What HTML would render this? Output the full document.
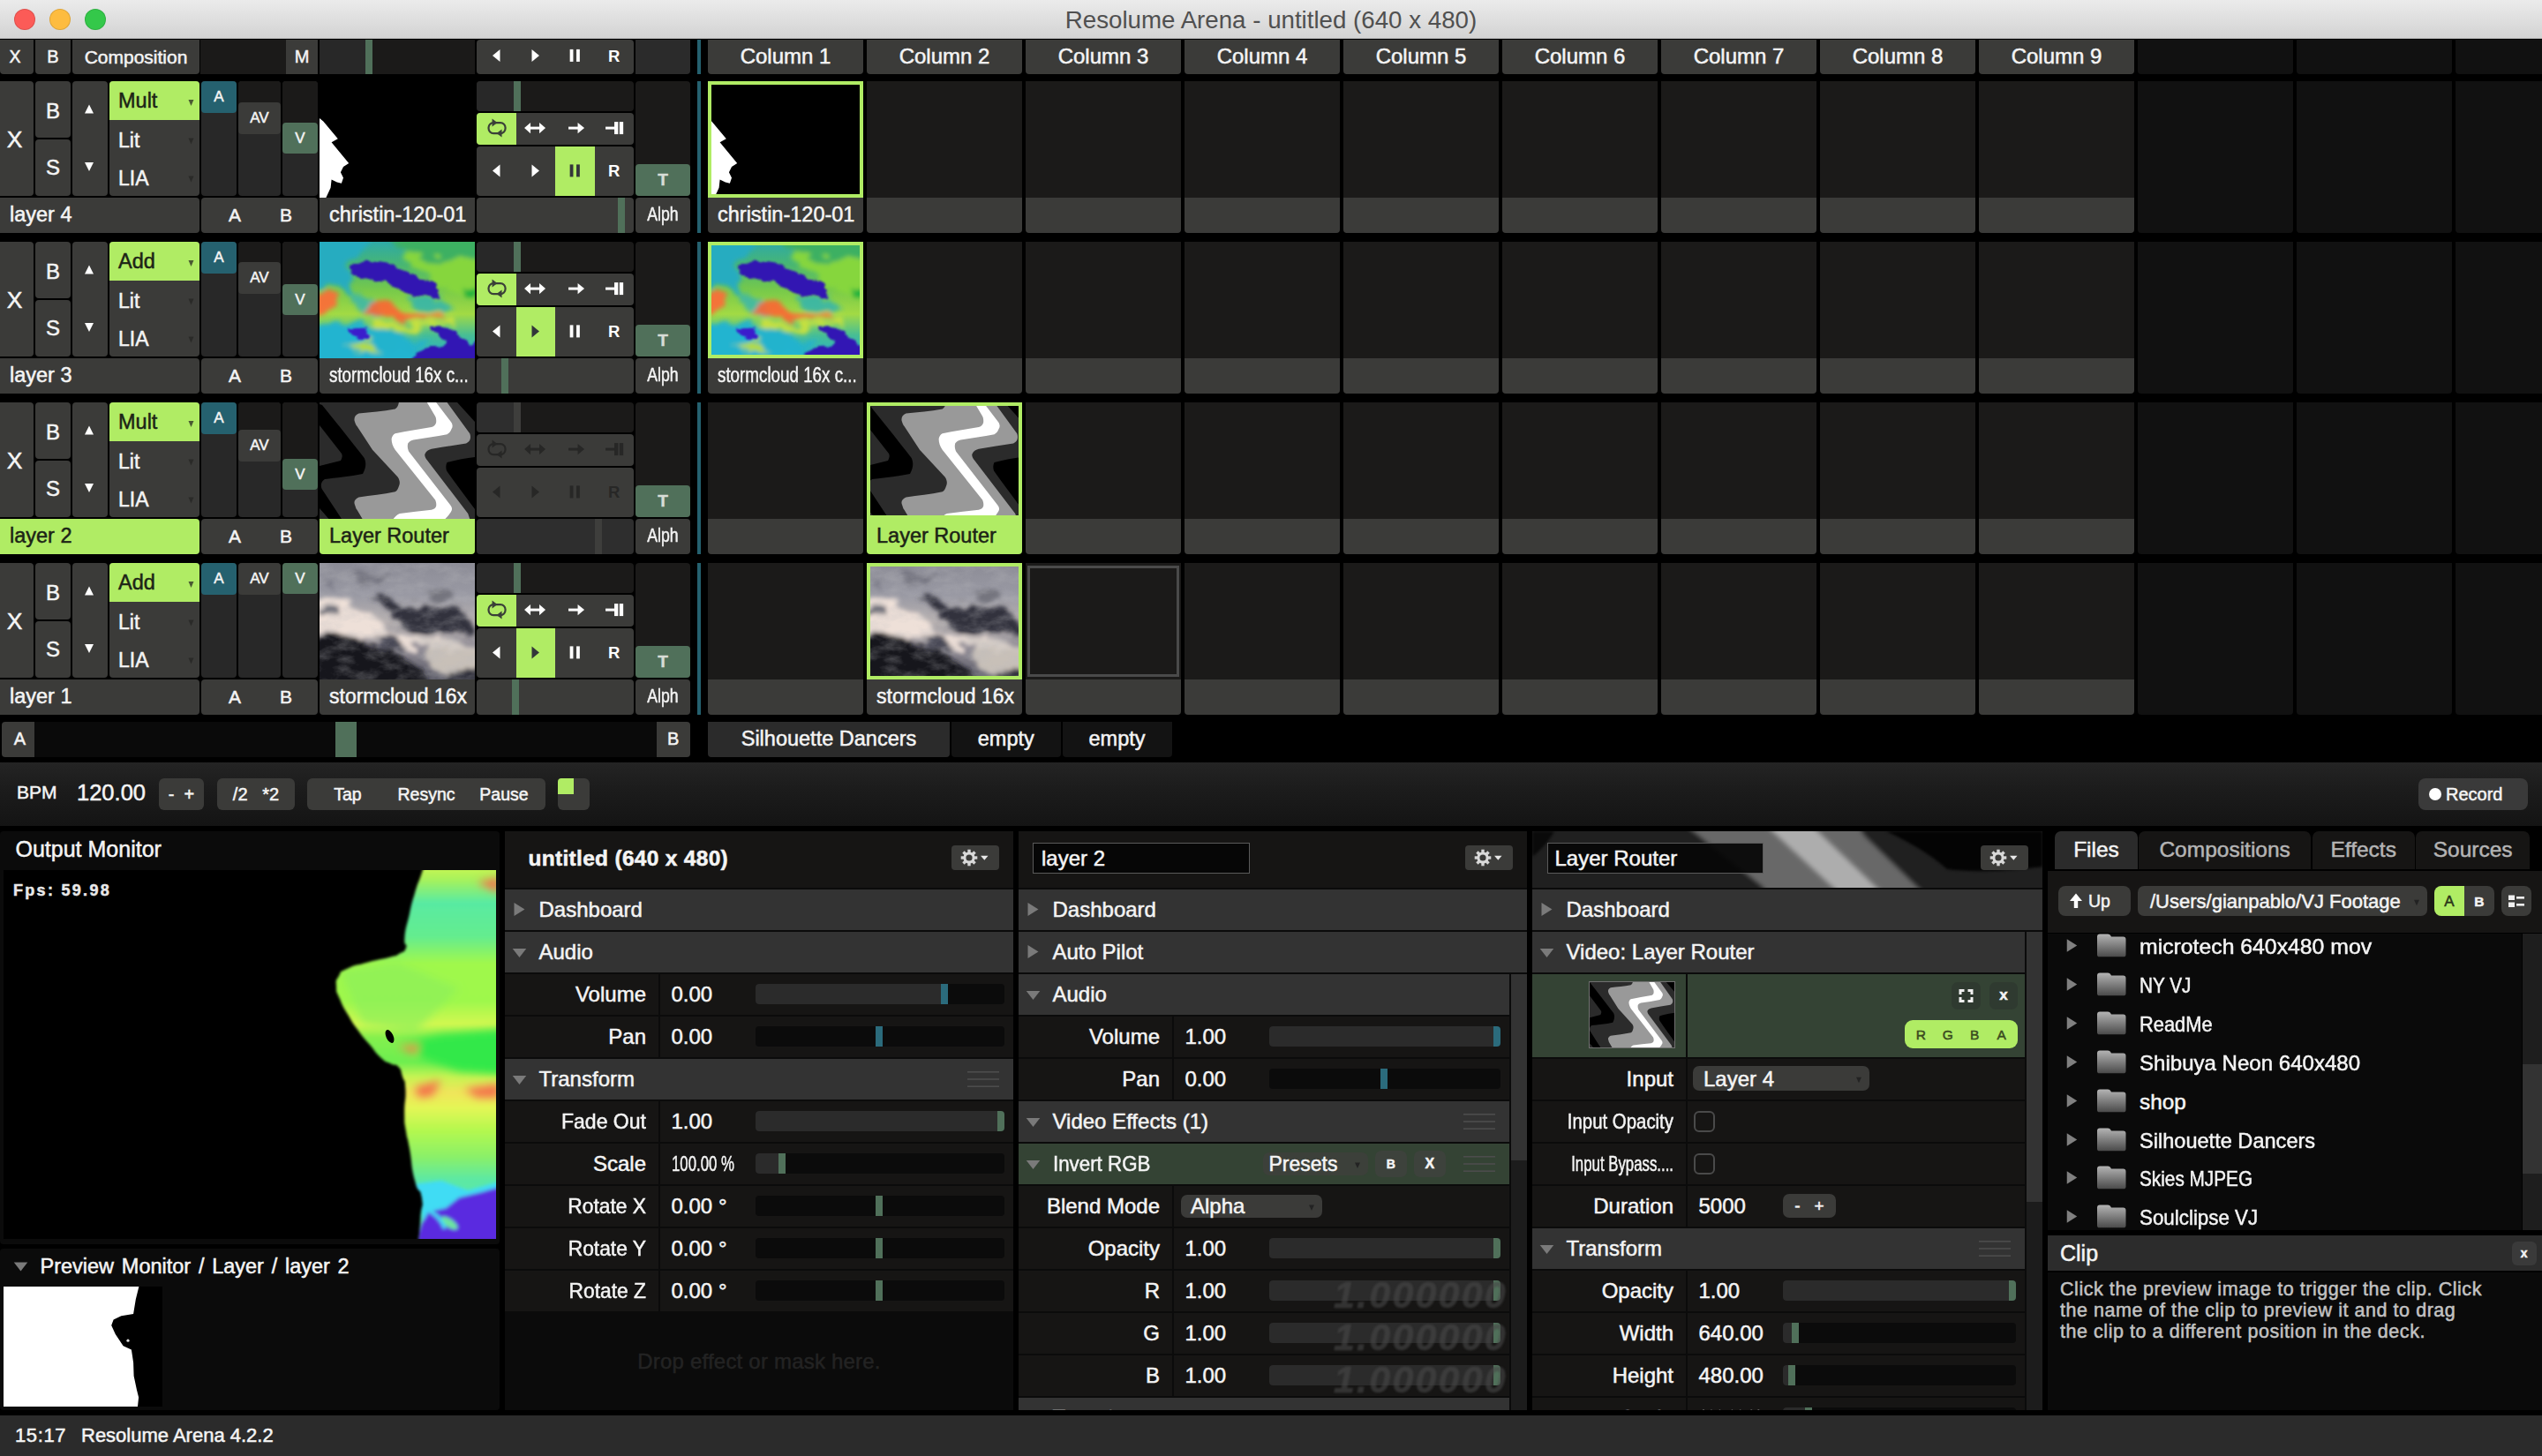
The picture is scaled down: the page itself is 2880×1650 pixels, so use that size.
<!DOCTYPE html>
<html><head><meta charset="utf-8"><title>Resolume Arena - untitled (640 x 480)</title>
<style>
html,body{margin:0;padding:0;background:#000;}
body{width:2880px;height:1650px;overflow:hidden;position:relative;font-family:"Liberation Sans",sans-serif;color:#f4f4f4;}
.b{position:absolute;display:block;}
.t{white-space:nowrap;-webkit-text-stroke:0.5px currentColor;}
svg text{font-family:"Liberation Sans",sans-serif;}
</style></head>
<body>

<svg width="0" height="0" style="position:absolute">
<defs>
<filter id="bl1" x="-10%" y="-10%" width="120%" height="120%"><feGaussianBlur stdDeviation="0.6"/></filter>
<filter id="bl15" x="-5%" y="-5%" width="110%" height="110%"><feGaussianBlur stdDeviation="1.5"/></filter>
<filter id="bl3" x="-20%" y="-20%" width="140%" height="140%"><feGaussianBlur stdDeviation="2.6"/></filter>
<filter id="bl5" x="-20%" y="-20%" width="140%" height="140%"><feGaussianBlur stdDeviation="5"/></filter>
<filter id="bl8" x="-20%" y="-20%" width="140%" height="140%"><feGaussianBlur stdDeviation="8"/></filter>

<!-- grey wave pattern 176x132 -->
<symbol id="wave" viewBox="0 0 176 132" preserveAspectRatio="none">
 <rect width="176" height="132" fill="#2b2b2b"/>
 <g filter="url(#bl1)">
 <path d="M0,2 L3,3 C20,24 36,44 50.7,63 C53,68 53,74 49,81 C35,84 18,85.5 6,87 C1,90 1,96 3.3,99 L25,132 L10.5,132 L0,120 L0,72 C8,70 16,68 24,66 C26,62 26,60 25,58 L0,26 Z" fill="#000"/>
 <path d="M144.5,68 C156,65 166,63 176,62 L176,121 C165,106 154,92 144,77.5 C143,74 143,71 144.5,68 Z" fill="#000"/>
 <path d="M156,0 L176,0 L176,22 Z" fill="#000"/>
 <path d="M89.9,0 C89,4 88,6 85.7,7.4 C72,10 58,11 44.5,12.6 C40,14 38.5,19 40,22 C41,25 41.5,26 42.5,27 L60,53.8 L88.8,84.7 C91,88 91.5,92 89.9,95 C89,98 88,100 85.7,101.2 C72,104 58,105.5 44.5,107.4 C40,109 38.5,113 40,116 C41,119 41.5,121 42.5,121.8 L48.6,132 L170.2,132 L168.2,125.9 L120.8,64.1 C119,61 119,59 119.7,57.9 C121,55 124,53.5 126.9,52.8 C140,50.5 153,48.5 166.1,46.6 C169,45 170.5,43 170.8,41 C171.2,39 171,37 170.2,35.2 L144.5,0 Z" fill="#999"/>
 <path d="M121.8,0 L132.1,0 L149.6,22.9 C151,25.5 151,28 149.6,30.1 C148.5,33 147,35 144.5,36.3 C132,38.8 119,40.5 106.3,42.5 C103,43.5 101,45 100.2,46.6 C99.3,49.5 100,53 101.2,55.8 L147.6,115.6 C150,118.5 150.5,120.5 149.6,122.8 C148,126 145.5,129 142.4,132 L83.7,132 C85.5,129.5 88,127 90.9,125.9 C103,124.3 115,123 126.9,121.8 C130,121 131.5,119.5 132.1,117.7 C132.6,115 132,112.5 131.1,110.5 L85.7,53.8 C83,49.5 81.6,45.5 81.6,41.4 C82,38.5 83.5,36.3 85.7,35.2 C99,32.5 113,30.3 126.9,28 C130,27 131.5,25 132.1,22.9 C132.5,20 132,17.5 131.1,15.7 Z" fill="#fff"/>
 </g>
</symbol>

<!-- heat-map cloud 176x132 -->
<filter id="rough" x="-10%" y="-10%" width="120%" height="120%">
 <feTurbulence type="fractalNoise" baseFrequency="0.045 0.07" numOctaves="3" seed="7" result="n"/>
 <feDisplacementMap in="SourceGraphic" in2="n" scale="16" xChannelSelector="R" yChannelSelector="G"/>
 <feGaussianBlur stdDeviation="1.1"/>
</filter>
<filter id="rough2" x="-10%" y="-10%" width="120%" height="120%">
 <feTurbulence type="fractalNoise" baseFrequency="0.035 0.06" numOctaves="4" seed="3" result="n"/>
 <feDisplacementMap in="SourceGraphic" in2="n" scale="26" xChannelSelector="R" yChannelSelector="G"/>
 <feGaussianBlur stdDeviation="2.6"/>
</filter>
<filter id="cnoise" x="0" y="0" width="100%" height="100%">
 <feTurbulence type="fractalNoise" baseFrequency="0.05 0.09" numOctaves="4" seed="11"/>
 <feColorMatrix type="matrix" values="0 0 0 0 0.5  0 0 0 0 0.5  0 0 0 0 0.52  1.6 0 0 0 -0.62"/>
</filter>
<symbol id="heat" viewBox="0 0 176 132" preserveAspectRatio="none">
 <linearGradient id="hg" x1="0" y1="0" x2="0" y2="1">
  <stop offset="0" stop-color="#2eaaa8"/><stop offset="0.2" stop-color="#48b672"/>
  <stop offset="0.42" stop-color="#78ca4a"/><stop offset="0.62" stop-color="#a2da44"/>
  <stop offset="0.8" stop-color="#48be94"/><stop offset="1" stop-color="#22b2cc"/>
 </linearGradient>
 <rect width="176" height="132" fill="url(#hg)"/>
 <g filter="url(#rough2)">
  <path d="M-10,-10 L64,-10 L34,30 L40,58 L-10,52 Z" fill="#26acc0"/>
  <path d="M96,16 L190,6 L190,72 L150,60 Z" fill="#86d63e"/>
  <path d="M-10,98 L40,92 L100,108 L112,142 L-10,142 Z" fill="#22b4d0"/>
  <path d="M100,58 L138,66 L152,78 L140,80 L104,68 Z" fill="#2ab2b6" opacity=".8"/><path d="M70,-12 L190,-12 L190,22 L100,14 Z" fill="#3cb062"/><path d="M36,50 L52,58 L72,84 L60,88 L40,66 Z" fill="#2ab0c0" opacity=".7"/>
  <path d="M40,86 L60,96 L100,112 L130,112 L120,122 L60,116 L30,100 Z" fill="#24b2cc" opacity=".9"/>
  <path d="M-6,62 L14,60 L18,74 L6,84 L-6,84 Z" fill="#ff6a38" opacity=".9"/>
  <path d="M52,78 L64,70 L88,68 L96,78 L136,82 L118,88 L96,90 L76,87 L62,84 Z" fill="#ff6232" opacity=".88"/><path d="M100,78 L138,80 L140,86 L100,87 Z" fill="#fa7a3a" opacity=".75"/>
  <path d="M60,90 L110,94 L152,84 L152,94 L100,102 L66,98 Z" fill="#c6e040"/>
  <path d="M26,118 L60,114 L72,124 L34,127 Z" fill="#b4dc3c"/>
  <path d="M160,54 L182,52 L182,62 L162,62 Z" fill="#24b43c"/>
 </g>
 <g filter="url(#rough)">
  <path d="M34,28 C44,21 60,21 72,26 C90,30 104,36 116,41 C124,39 132,50 136,60 C136,65 130,65 122,63 C110,61 100,58 90,51 C76,45 56,44 44,38 C38,34 34,32 34,28 Z" fill="#3016b2"/>
  <path d="M28,95 C36,95 48,97 56,100 C60,104 60,110 56,113 C50,113 46,112 42,108 C38,104 30,100 28,95 Z" fill="#3a1ccc"/>
  <path d="M126,100 C132,93 142,95 150,99 C158,103 160,111 168,117 L184,108 L184,140 L104,140 C106,124 118,119 130,119 C140,119 146,116 144,110 C138,106 130,104 126,100 Z" fill="#3216b4"/>
 </g>
</symbol>

<!-- grey storm cloud 176x132 -->
<symbol id="cloud" viewBox="0 0 176 132" preserveAspectRatio="none">
 <linearGradient id="cg" x1="0" y1="0" x2="0" y2="1">
  <stop offset="0" stop-color="#8c8c96"/><stop offset="0.28" stop-color="#9a9aa4"/>
  <stop offset="0.5" stop-color="#b6b0b0"/><stop offset="0.75" stop-color="#8a8690"/><stop offset="1" stop-color="#5a5a66"/>
 </linearGradient>
 <rect width="176" height="132" fill="url(#cg)"/>
 <g filter="url(#rough2)">
  <path d="M-14,40 L28,42 L58,56 L76,76 L120,84 L150,86 L150,96 L110,98 L60,88 L-14,76 Z" fill="#eee0d8"/>
  <path d="M100,86 L150,86 L190,92 L190,112 L130,108 Z" fill="#d4ccc6"/>
  <path d="M62,38 L86,42 L112,52 L150,50 L172,66 L170,84 L140,78 L108,74 L86,62 Z" fill="#30303e"/>
  <path d="M120,30 L140,22 L150,40 L128,44 Z" fill="#74747e"/>
  <path d="M-14,84 L28,82 L50,90 L84,100 L112,118 L124,146 L-14,146 Z" fill="#16161f"/>
  <path d="M60,84 L84,80 L96,96 L76,100 Z" fill="#4a4a56"/>
  <path d="M122,100 L190,94 L190,122 L150,128 L130,120 Z" fill="#c8c0b8"/>
  <path d="M148,124 L190,116 L190,146 L138,146 Z" fill="#32323e"/>
  <path d="M30,6 L76,8 L70,26 L40,24 Z" fill="#777782"/><path d="M10,16 L24,14 L22,30 L10,28 Z" fill="#7c7c88"/>
  <path d="M0,52 L20,54 L18,64 L0,62 Z" fill="#6e6e78"/>
 </g>
 <rect width="176" height="132" filter="url(#cnoise)" opacity=".38"/>
</symbol>

<!-- christin silhouette 176x132 -->
<symbol id="chris" viewBox="0 0 176 132" preserveAspectRatio="none">
 <rect width="176" height="132" fill="#000"/>
 <path d="M0,42 L4.3,45.6 L20.8,65.2 L13.6,69.3 L33.2,93 L27,97.1 L23.9,103.3 L27,109.5 L24.9,115.7 L19.8,114.6 L13.6,111.6 L12.6,120.8 L7.4,132 L0,132 Z" fill="#fff" filter="url(#bl1)"/>
</symbol>
</defs>
</svg>

<div class="b" style="left:0px;top:0px;width:2880px;height:44px;background:linear-gradient(#ebebeb,#d3d3d3);border-bottom:1px solid #b4b4b4;box-sizing:border-box;"></div>
<div class="b" style="left:16px;top:10px;width:24px;height:24px;background:#fc5b57;border-radius:50%;box-shadow:inset 0 0 0 1px rgba(0,0,0,.12);"></div>
<div class="b" style="left:56px;top:10px;width:24px;height:24px;background:#fdbc40;border-radius:50%;box-shadow:inset 0 0 0 1px rgba(0,0,0,.12);"></div>
<div class="b" style="left:96px;top:10px;width:24px;height:24px;background:#34c84a;border-radius:50%;box-shadow:inset 0 0 0 1px rgba(0,0,0,.12);"></div>
<div class="b t" style="left:940px;top:0px;width:1000px;height:45px;font-size:27.7px;line-height:45px;text-align:center;color:#505050;-webkit-text-stroke:0;">Resolume Arena - untitled (640 x 480)</div>
<div class="b" style="left:0px;top:44.5px;width:37.5px;height:39px;background:#3b3b39;border-radius:0 0 4px 4px;"></div>
<div class="b t" style="left:0px;top:44.5px;width:34px;height:39px;font-size:19.5px;line-height:39px;text-align:center;color:#f4f4f4;border-radius:0 0 4px 4px;">X</div>
<div class="b t" style="left:40px;top:44.5px;width:40px;height:39px;background:#3b3b39;font-size:20px;line-height:39px;text-align:center;color:#f4f4f4;border-radius:0 0 4px 4px;">B</div>
<div class="b t" style="left:82px;top:44.5px;width:144px;height:39px;background:#3b3b39;font-size:21px;line-height:39px;text-align:center;color:#f4f4f4;border-radius:0 0 4px 4px;">Composition</div>
<div class="b" style="left:227px;top:44.5px;width:133px;height:39px;background:#1b1a19;"></div>
<div class="b t" style="left:324px;top:44.5px;width:36px;height:39px;background:#3b3b39;font-size:20px;line-height:39px;text-align:center;color:#f4f4f4;">M</div>
<div class="b" style="left:362px;top:44.5px;width:176px;height:39px;background:#1b1a19;"></div>
<div class="b" style="left:362px;top:44.5px;width:52px;height:39px;background:#282828;"></div>
<div class="b" style="left:414px;top:44.5px;width:8px;height:39px;background:#50705a;"></div>
<div class="b" style="left:540px;top:44.5px;width:178px;height:39px;background:#3b3b39;border-radius:4px;overflow:hidden;"></div>
<svg class="b" style="left:540px;top:44.5px;" width="178" height="39" viewBox="0 0 178 39"><polygon points="26.5,10.9 26.5,24.9 18,17.9" fill="#fff"/><polygon points="62.5,10.9 62.5,24.9 71,17.9" fill="#fff"/><rect x="105.65" y="10.9" width="3.8" height="14" fill="#fff"/><rect x="113.05" y="10.9" width="3.8" height="14" fill="#fff"/><text x="155.75" y="24.5" font-size="18.5" font-weight="bold" text-anchor="middle" fill="#fff">R</text></svg>
<div class="b" style="left:720px;top:44.5px;width:62px;height:39px;background:#2b2b2b;border-radius:0 0 4px 0;"></div>
<div class="b" style="left:790px;top:44.5px;width:4px;height:39px;background:#25616f;"></div>
<div class="b" style="left:802px;top:44.5px;width:176px;height:39px;background:#3b3b39;border-radius:0 0 4px 4px;"></div>
<div class="b t" style="left:802px;top:44.5px;width:176px;height:38px;font-size:24px;line-height:38px;text-align:center;color:#f4f4f4;border-radius:0 0 4px 4px;">Column 1</div>
<div class="b" style="left:982px;top:44.5px;width:176px;height:39px;background:#3b3b39;border-radius:0 0 4px 4px;"></div>
<div class="b t" style="left:982px;top:44.5px;width:176px;height:38px;font-size:24px;line-height:38px;text-align:center;color:#f4f4f4;border-radius:0 0 4px 4px;">Column 2</div>
<div class="b" style="left:1162px;top:44.5px;width:176px;height:39px;background:#3b3b39;border-radius:0 0 4px 4px;"></div>
<div class="b t" style="left:1162px;top:44.5px;width:176px;height:38px;font-size:24px;line-height:38px;text-align:center;color:#f4f4f4;border-radius:0 0 4px 4px;">Column 3</div>
<div class="b" style="left:1342px;top:44.5px;width:176px;height:39px;background:#3b3b39;border-radius:0 0 4px 4px;"></div>
<div class="b t" style="left:1342px;top:44.5px;width:176px;height:38px;font-size:24px;line-height:38px;text-align:center;color:#f4f4f4;border-radius:0 0 4px 4px;">Column 4</div>
<div class="b" style="left:1522px;top:44.5px;width:176px;height:39px;background:#3b3b39;border-radius:0 0 4px 4px;"></div>
<div class="b t" style="left:1522px;top:44.5px;width:176px;height:38px;font-size:24px;line-height:38px;text-align:center;color:#f4f4f4;border-radius:0 0 4px 4px;">Column 5</div>
<div class="b" style="left:1702px;top:44.5px;width:176px;height:39px;background:#3b3b39;border-radius:0 0 4px 4px;"></div>
<div class="b t" style="left:1702px;top:44.5px;width:176px;height:38px;font-size:24px;line-height:38px;text-align:center;color:#f4f4f4;border-radius:0 0 4px 4px;">Column 6</div>
<div class="b" style="left:1882px;top:44.5px;width:176px;height:39px;background:#3b3b39;border-radius:0 0 4px 4px;"></div>
<div class="b t" style="left:1882px;top:44.5px;width:176px;height:38px;font-size:24px;line-height:38px;text-align:center;color:#f4f4f4;border-radius:0 0 4px 4px;">Column 7</div>
<div class="b" style="left:2062px;top:44.5px;width:176px;height:39px;background:#3b3b39;border-radius:0 0 4px 4px;"></div>
<div class="b t" style="left:2062px;top:44.5px;width:176px;height:38px;font-size:24px;line-height:38px;text-align:center;color:#f4f4f4;border-radius:0 0 4px 4px;">Column 8</div>
<div class="b" style="left:2242px;top:44.5px;width:176px;height:39px;background:#3b3b39;border-radius:0 0 4px 4px;"></div>
<div class="b t" style="left:2242px;top:44.5px;width:176px;height:38px;font-size:24px;line-height:38px;text-align:center;color:#f4f4f4;border-radius:0 0 4px 4px;">Column 9</div>
<div class="b" style="left:2422px;top:44.5px;width:176px;height:39px;background:#111111;border-radius:0 0 4px 4px;"></div>
<div class="b" style="left:2602px;top:44.5px;width:176px;height:39px;background:#111111;border-radius:0 0 4px 4px;"></div>
<div class="b" style="left:2782px;top:44.5px;width:176px;height:39px;background:#111111;border-radius:0 0 4px 4px;"></div>
<div class="b" style="left:0px;top:92px;width:37.5px;height:130px;background:#3b3b39;border-radius:0 4px 4px 0;"></div>
<div class="b t" style="left:0px;top:92px;width:33px;height:130px;font-size:26.5px;line-height:130px;text-align:center;color:#f4f4f4;padding-top:1px;">X</div>
<div class="b" style="left:40px;top:92px;width:40px;height:63.5px;background:#3b3b39;border-radius:4px;"></div>
<div class="b t" style="left:40px;top:93.5px;width:40px;height:63.5px;font-size:24px;line-height:63.5px;text-align:center;color:#f4f4f4;">B</div>
<div class="b t" style="left:40px;top:157.5px;width:40px;height:64.5px;background:#3b3b39;font-size:24px;line-height:64.5px;text-align:center;color:#f4f4f4;border-radius:4px;">S</div>
<div class="b" style="left:82px;top:92px;width:40px;height:130px;background:#3b3b39;border-radius:4px;"></div>
<svg class="b" style="left:82px;top:92px;" width="40" height="130" viewBox="0 0 40 130"><polygon points="14,36.5 24,36.5 19,26.5" fill="#fff"/><polygon points="14,92 24,92 19,102" fill="#fff"/></svg>
<div class="b" style="left:124px;top:92px;width:102px;height:130px;background:#3b3b39;border-radius:4px;overflow:hidden;"><div class="b" style="left:0;top:0;width:102px;height:43.7px;background:#b0ec64"></div></div>
<div class="b t" style="left:124px;top:93px;width:92px;height:43.7px;font-size:23.5px;line-height:43.7px;text-align:left;color:#1c2416;padding-left:10px;">Mult</div>
<div class="b t" style="left:124px;top:137.5px;width:92px;height:43.3px;font-size:23px;line-height:43.3px;text-align:left;color:#f4f4f4;padding-left:10px;">Lit</div>
<div class="b t" style="left:124px;top:181px;width:92px;height:43px;font-size:23px;line-height:43px;text-align:left;color:#f4f4f4;padding-left:10px;">LIA</div>
<svg class="b" style="left:124px;top:92px;" width="102" height="130" viewBox="0 0 102 130"><polygon points="89.5,21 95.5,21 92.5,28" fill="#4a5a32"/><polygon points="89.5,64.5 95.5,64.5 92.5,71.5" fill="#2a2a28"/><polygon points="89.5,107.5 95.5,107.5 92.5,114.5" fill="#2a2a28"/></svg>
<div class="b" style="left:228px;top:92px;width:40px;height:130px;background:#282828;border-radius:4px;"></div>
<div class="b t" style="left:228px;top:92px;width:40px;height:36px;background:#25616f;font-size:17px;line-height:36px;text-align:center;color:#f4f4f4;border-radius:4px;">A</div>
<div class="b" style="left:270px;top:92px;width:48px;height:130px;background:#282828;border-radius:4px;"></div>
<div class="b" style="left:270px;top:92px;width:48px;height:30px;background:#1b1a19;border-radius:4px 4px 0 0;"></div>
<div class="b t" style="left:270px;top:116px;width:48px;height:35.5px;background:#3b3b39;font-size:17px;line-height:35.5px;text-align:center;color:#f4f4f4;border-radius:4px;">AV</div>
<div class="b" style="left:320px;top:92px;width:40px;height:130px;background:#282828;border-radius:4px;"></div>
<div class="b" style="left:320px;top:92px;width:40px;height:53px;background:#1b1a19;border-radius:4px 4px 0 0;"></div>
<div class="b t" style="left:320px;top:139px;width:40px;height:35px;background:#50705a;font-size:17px;line-height:35px;text-align:center;color:#f4f4f4;border-radius:4px;">V</div>
<svg class="b" style="left:362px;top:92px;" width="176" height="132"><use href="#chris" width="176" height="132"/></svg>
<div class="b" style="left:540px;top:92px;width:178px;height:34px;background:#1b1a19;border-radius:4px;"></div>
<div class="b" style="left:540px;top:92px;width:42px;height:34px;background:#282828;border-radius:4px 0 0 4px;"></div>
<div class="b" style="left:582px;top:92px;width:8px;height:34px;background:#50705a;"></div>
<div class="b" style="left:540px;top:128px;width:178px;height:35.8px;background:#3b3b39;border-radius:4px;overflow:hidden;"><div class="b" style="left:0px;top:0;width:44.5px;height:35.8px;background:#b0ec64"></div></div>
<svg class="b" style="left:540px;top:128px;" width="178" height="35.8" viewBox="0 0 178 35.8"><rect x="13.55" y="11.1" width="19" height="12" rx="5.5" fill="none" stroke="#3a4038" stroke-width="2.2"/><polygon points="17.55,6.6 17.55,15.6 23.55,11.1" fill="#3a4038"/><polygon points="28.55,27.6 28.55,18.6 22.55,23.1" fill="#3a4038"/><rect x="58.05" y="15.6" width="16" height="3" fill="#fff"/><polygon points="54.05,17.1 61.05,10.9 61.05,23.3" fill="#fff"/><polygon points="78.05,17.1 71.05,10.9 71.05,23.3" fill="#fff"/><rect x="104.05" y="15.6" width="13" height="3" fill="#fff"/><polygon points="122.05,17.1 114.55,10.9 114.55,23.3" fill="#fff"/><rect x="146.05" y="15.6" width="11" height="3" fill="#fff"/><rect x="156.05" y="10.1" width="4.3" height="14" fill="#fff"/><rect x="161.85" y="10.1" width="4.3" height="14" fill="#fff"/></svg>
<div class="b" style="left:540px;top:166px;width:178px;height:56px;background:#3b3b39;border-radius:4px;overflow:hidden;"><div class="b" style="left:89px;top:0;width:44.5px;height:56px;background:#b0ec64"></div></div>
<svg class="b" style="left:540px;top:166px;" width="178" height="56" viewBox="0 0 178 56"><polygon points="26.5,20.4 26.5,34.4 18,27.4" fill="#fff"/><polygon points="62.5,20.4 62.5,34.4 71,27.4" fill="#fff"/><rect x="105.65" y="20.4" width="3.8" height="14" fill="#33363a"/><rect x="113.05" y="20.4" width="3.8" height="14" fill="#33363a"/><text x="155.75" y="34" font-size="18.5" font-weight="bold" text-anchor="middle" fill="#fff">R</text></svg>
<div class="b" style="left:720px;top:92px;width:62px;height:130px;background:#1b1a19;border-radius:4px;"></div>
<div class="b t" style="left:720px;top:186px;width:62px;height:36px;background:#50705a;font-size:19px;line-height:36px;text-align:center;color:#d8dcd6;font-weight:bold;border-radius:4px;">T</div>
<div class="b t" style="left:0px;top:224px;width:215px;height:39.6px;background:#3b3b39;font-size:23.5px;line-height:39.6px;text-align:left;color:#f4f4f4;padding-left:11px;border-radius:0 4px 4px 0;">layer 4</div>
<div class="b" style="left:228px;top:224px;width:132px;height:39.6px;background:#3b3b39;border-radius:4px;"></div>
<div class="b t" style="left:228px;top:224px;width:76px;height:39.6px;font-size:21px;line-height:39.6px;text-align:center;color:#f4f4f4;">A</div>
<div class="b t" style="left:290px;top:224px;width:68px;height:39.6px;font-size:21px;line-height:39.6px;text-align:center;color:#f4f4f4;">B</div>
<div class="b" style="left:362px;top:224px;width:176px;height:39.6px;background:#3b3b39;border-radius:0 0 4px 4px;"></div>
<div class="b t" style="left:362px;top:224px;width:165px;height:39.6px;font-size:23.5px;line-height:39.6px;text-align:left;color:#f4f4f4;padding-left:11px;">christin-120-01</div>
<div class="b" style="left:540px;top:224px;width:178px;height:39.6px;background:#3b3b39;border-radius:4px;"></div>
<div class="b" style="left:700px;top:224px;width:8px;height:39.6px;background:#50705a;"></div>
<div class="b" style="left:720px;top:224px;width:62px;height:39.6px;background:#3b3b39;border-radius:4px;"></div>
<div class="b t" style="left:720px;top:224px;width:62px;height:39.6px;font-size:21.5px;line-height:39.6px;text-align:center;color:#f4f4f4;transform:scaleX(.82);">Alph</div>
<div class="b" style="left:790px;top:92px;width:4px;height:171.6px;background:#25616f;"></div>
<svg class="b" style="left:802px;top:92px;" width="176" height="132"><use href="#chris" width="176" height="132"/></svg>
<div class="b" style="left:802px;top:92px;width:176px;height:132px;box-sizing:border-box;border:4px solid #b0ec64;"></div>
<div class="b" style="left:802px;top:224px;width:176px;height:39.6px;background:#3b3b39;border-radius:0 0 4px 4px;"></div>
<div class="b t" style="left:802px;top:224px;width:165px;height:39.6px;font-size:23.5px;line-height:39.6px;text-align:left;color:#f4f4f4;padding-left:11px;">christin-120-01</div>
<div class="b" style="left:982px;top:92px;width:176px;height:132px;background:#1b1a19;"></div>
<div class="b" style="left:982px;top:224px;width:176px;height:39.6px;background:#3b3b39;border-radius:0 0 4px 4px;"></div>
<div class="b" style="left:1162px;top:92px;width:176px;height:132px;background:#1b1a19;"></div>
<div class="b" style="left:1162px;top:224px;width:176px;height:39.6px;background:#3b3b39;border-radius:0 0 4px 4px;"></div>
<div class="b" style="left:1342px;top:92px;width:176px;height:132px;background:#1b1a19;"></div>
<div class="b" style="left:1342px;top:224px;width:176px;height:39.6px;background:#3b3b39;border-radius:0 0 4px 4px;"></div>
<div class="b" style="left:1522px;top:92px;width:176px;height:132px;background:#1b1a19;"></div>
<div class="b" style="left:1522px;top:224px;width:176px;height:39.6px;background:#3b3b39;border-radius:0 0 4px 4px;"></div>
<div class="b" style="left:1702px;top:92px;width:176px;height:132px;background:#1b1a19;"></div>
<div class="b" style="left:1702px;top:224px;width:176px;height:39.6px;background:#3b3b39;border-radius:0 0 4px 4px;"></div>
<div class="b" style="left:1882px;top:92px;width:176px;height:132px;background:#1b1a19;"></div>
<div class="b" style="left:1882px;top:224px;width:176px;height:39.6px;background:#3b3b39;border-radius:0 0 4px 4px;"></div>
<div class="b" style="left:2062px;top:92px;width:176px;height:132px;background:#1b1a19;"></div>
<div class="b" style="left:2062px;top:224px;width:176px;height:39.6px;background:#3b3b39;border-radius:0 0 4px 4px;"></div>
<div class="b" style="left:2242px;top:92px;width:176px;height:132px;background:#1b1a19;"></div>
<div class="b" style="left:2242px;top:224px;width:176px;height:39.6px;background:#3b3b39;border-radius:0 0 4px 4px;"></div>
<div class="b" style="left:2422px;top:92px;width:176px;height:171.6px;background:#111111;border-radius:0 0 4px 4px;"></div>
<div class="b" style="left:2602px;top:92px;width:176px;height:171.6px;background:#111111;border-radius:0 0 4px 4px;"></div>
<div class="b" style="left:2782px;top:92px;width:176px;height:171.6px;background:#111111;border-radius:0 0 4px 4px;"></div>
<div class="b" style="left:0px;top:274px;width:37.5px;height:130px;background:#3b3b39;border-radius:0 4px 4px 0;"></div>
<div class="b t" style="left:0px;top:274px;width:33px;height:130px;font-size:26.5px;line-height:130px;text-align:center;color:#f4f4f4;padding-top:1px;">X</div>
<div class="b" style="left:40px;top:274px;width:40px;height:63.5px;background:#3b3b39;border-radius:4px;"></div>
<div class="b t" style="left:40px;top:275.5px;width:40px;height:63.5px;font-size:24px;line-height:63.5px;text-align:center;color:#f4f4f4;">B</div>
<div class="b t" style="left:40px;top:339.5px;width:40px;height:64.5px;background:#3b3b39;font-size:24px;line-height:64.5px;text-align:center;color:#f4f4f4;border-radius:4px;">S</div>
<div class="b" style="left:82px;top:274px;width:40px;height:130px;background:#3b3b39;border-radius:4px;"></div>
<svg class="b" style="left:82px;top:274px;" width="40" height="130" viewBox="0 0 40 130"><polygon points="14,36.5 24,36.5 19,26.5" fill="#fff"/><polygon points="14,92 24,92 19,102" fill="#fff"/></svg>
<div class="b" style="left:124px;top:274px;width:102px;height:130px;background:#3b3b39;border-radius:4px;overflow:hidden;"><div class="b" style="left:0;top:0;width:102px;height:43.7px;background:#b0ec64"></div></div>
<div class="b t" style="left:124px;top:275px;width:92px;height:43.7px;font-size:23.5px;line-height:43.7px;text-align:left;color:#1c2416;padding-left:10px;">Add</div>
<div class="b t" style="left:124px;top:319.5px;width:92px;height:43.3px;font-size:23px;line-height:43.3px;text-align:left;color:#f4f4f4;padding-left:10px;">Lit</div>
<div class="b t" style="left:124px;top:363px;width:92px;height:43px;font-size:23px;line-height:43px;text-align:left;color:#f4f4f4;padding-left:10px;">LIA</div>
<svg class="b" style="left:124px;top:274px;" width="102" height="130" viewBox="0 0 102 130"><polygon points="89.5,21 95.5,21 92.5,28" fill="#4a5a32"/><polygon points="89.5,64.5 95.5,64.5 92.5,71.5" fill="#2a2a28"/><polygon points="89.5,107.5 95.5,107.5 92.5,114.5" fill="#2a2a28"/></svg>
<div class="b" style="left:228px;top:274px;width:40px;height:130px;background:#282828;border-radius:4px;"></div>
<div class="b t" style="left:228px;top:274px;width:40px;height:36px;background:#25616f;font-size:17px;line-height:36px;text-align:center;color:#f4f4f4;border-radius:4px;">A</div>
<div class="b" style="left:270px;top:274px;width:48px;height:130px;background:#282828;border-radius:4px;"></div>
<div class="b" style="left:270px;top:274px;width:48px;height:29px;background:#1b1a19;border-radius:4px 4px 0 0;"></div>
<div class="b t" style="left:270px;top:297px;width:48px;height:35.5px;background:#3b3b39;font-size:17px;line-height:35.5px;text-align:center;color:#f4f4f4;border-radius:4px;">AV</div>
<div class="b" style="left:320px;top:274px;width:40px;height:130px;background:#282828;border-radius:4px;"></div>
<div class="b" style="left:320px;top:274px;width:40px;height:54px;background:#1b1a19;border-radius:4px 4px 0 0;"></div>
<div class="b t" style="left:320px;top:322px;width:40px;height:35px;background:#50705a;font-size:17px;line-height:35px;text-align:center;color:#f4f4f4;border-radius:4px;">V</div>
<svg class="b" style="left:362px;top:274px;" width="176" height="132"><use href="#heat" width="176" height="132"/></svg>
<div class="b" style="left:540px;top:274px;width:178px;height:34px;background:#1b1a19;border-radius:4px;"></div>
<div class="b" style="left:540px;top:274px;width:42px;height:34px;background:#282828;border-radius:4px 0 0 4px;"></div>
<div class="b" style="left:582px;top:274px;width:8px;height:34px;background:#50705a;"></div>
<div class="b" style="left:540px;top:310px;width:178px;height:35.8px;background:#3b3b39;border-radius:4px;overflow:hidden;"><div class="b" style="left:0px;top:0;width:44.5px;height:35.8px;background:#b0ec64"></div></div>
<svg class="b" style="left:540px;top:310px;" width="178" height="35.8" viewBox="0 0 178 35.8"><rect x="13.55" y="11.1" width="19" height="12" rx="5.5" fill="none" stroke="#3a4038" stroke-width="2.2"/><polygon points="17.55,6.6 17.55,15.6 23.55,11.1" fill="#3a4038"/><polygon points="28.55,27.6 28.55,18.6 22.55,23.1" fill="#3a4038"/><rect x="58.05" y="15.6" width="16" height="3" fill="#fff"/><polygon points="54.05,17.1 61.05,10.9 61.05,23.3" fill="#fff"/><polygon points="78.05,17.1 71.05,10.9 71.05,23.3" fill="#fff"/><rect x="104.05" y="15.6" width="13" height="3" fill="#fff"/><polygon points="122.05,17.1 114.55,10.9 114.55,23.3" fill="#fff"/><rect x="146.05" y="15.6" width="11" height="3" fill="#fff"/><rect x="156.05" y="10.1" width="4.3" height="14" fill="#fff"/><rect x="161.85" y="10.1" width="4.3" height="14" fill="#fff"/></svg>
<div class="b" style="left:540px;top:348px;width:178px;height:56px;background:#3b3b39;border-radius:4px;overflow:hidden;"><div class="b" style="left:44.5px;top:0;width:44.5px;height:56px;background:#b0ec64"></div></div>
<svg class="b" style="left:540px;top:348px;" width="178" height="56" viewBox="0 0 178 56"><polygon points="26.5,20.4 26.5,34.4 18,27.4" fill="#fff"/><polygon points="62.5,20.4 62.5,34.4 71,27.4" fill="#33363a"/><rect x="105.65" y="20.4" width="3.8" height="14" fill="#fff"/><rect x="113.05" y="20.4" width="3.8" height="14" fill="#fff"/><text x="155.75" y="34" font-size="18.5" font-weight="bold" text-anchor="middle" fill="#fff">R</text></svg>
<div class="b" style="left:720px;top:274px;width:62px;height:130px;background:#1b1a19;border-radius:4px;"></div>
<div class="b t" style="left:720px;top:368px;width:62px;height:36px;background:#50705a;font-size:19px;line-height:36px;text-align:center;color:#d8dcd6;font-weight:bold;border-radius:4px;">T</div>
<div class="b t" style="left:0px;top:406px;width:215px;height:39.6px;background:#3b3b39;font-size:23.5px;line-height:39.6px;text-align:left;color:#f4f4f4;padding-left:11px;border-radius:0 4px 4px 0;">layer 3</div>
<div class="b" style="left:228px;top:406px;width:132px;height:39.6px;background:#3b3b39;border-radius:4px;"></div>
<div class="b t" style="left:228px;top:406px;width:76px;height:39.6px;font-size:21px;line-height:39.6px;text-align:center;color:#f4f4f4;">A</div>
<div class="b t" style="left:290px;top:406px;width:68px;height:39.6px;font-size:21px;line-height:39.6px;text-align:center;color:#f4f4f4;">B</div>
<div class="b" style="left:362px;top:406px;width:176px;height:39.6px;background:#3b3b39;border-radius:0 0 4px 4px;"></div>
<div class="b t" style="left:362px;top:406px;width:165px;height:39.6px;font-size:23.5px;line-height:39.6px;text-align:left;color:#f4f4f4;padding-left:11px;transform:scaleX(.8);transform-origin:11px 50%;white-space:nowrap;">stormcloud 16x c...</div>
<div class="b" style="left:540px;top:406px;width:178px;height:39.6px;background:#3b3b39;border-radius:4px;"></div>
<div class="b" style="left:568px;top:406px;width:8px;height:39.6px;background:#50705a;"></div>
<div class="b" style="left:720px;top:406px;width:62px;height:39.6px;background:#3b3b39;border-radius:4px;"></div>
<div class="b t" style="left:720px;top:406px;width:62px;height:39.6px;font-size:21.5px;line-height:39.6px;text-align:center;color:#f4f4f4;transform:scaleX(.82);">Alph</div>
<div class="b" style="left:790px;top:274px;width:4px;height:171.6px;background:#25616f;"></div>
<svg class="b" style="left:802px;top:274px;" width="176" height="132"><use href="#heat" width="176" height="132"/></svg>
<div class="b" style="left:802px;top:274px;width:176px;height:132px;box-sizing:border-box;border:4px solid #b0ec64;"></div>
<div class="b" style="left:802px;top:406px;width:176px;height:39.6px;background:#3b3b39;border-radius:0 0 4px 4px;"></div>
<div class="b t" style="left:802px;top:406px;width:165px;height:39.6px;font-size:23.5px;line-height:39.6px;text-align:left;color:#f4f4f4;padding-left:11px;transform:scaleX(.8);transform-origin:11px 50%;white-space:nowrap;">stormcloud 16x c...</div>
<div class="b" style="left:982px;top:274px;width:176px;height:132px;background:#1b1a19;"></div>
<div class="b" style="left:982px;top:406px;width:176px;height:39.6px;background:#3b3b39;border-radius:0 0 4px 4px;"></div>
<div class="b" style="left:1162px;top:274px;width:176px;height:132px;background:#1b1a19;"></div>
<div class="b" style="left:1162px;top:406px;width:176px;height:39.6px;background:#3b3b39;border-radius:0 0 4px 4px;"></div>
<div class="b" style="left:1342px;top:274px;width:176px;height:132px;background:#1b1a19;"></div>
<div class="b" style="left:1342px;top:406px;width:176px;height:39.6px;background:#3b3b39;border-radius:0 0 4px 4px;"></div>
<div class="b" style="left:1522px;top:274px;width:176px;height:132px;background:#1b1a19;"></div>
<div class="b" style="left:1522px;top:406px;width:176px;height:39.6px;background:#3b3b39;border-radius:0 0 4px 4px;"></div>
<div class="b" style="left:1702px;top:274px;width:176px;height:132px;background:#1b1a19;"></div>
<div class="b" style="left:1702px;top:406px;width:176px;height:39.6px;background:#3b3b39;border-radius:0 0 4px 4px;"></div>
<div class="b" style="left:1882px;top:274px;width:176px;height:132px;background:#1b1a19;"></div>
<div class="b" style="left:1882px;top:406px;width:176px;height:39.6px;background:#3b3b39;border-radius:0 0 4px 4px;"></div>
<div class="b" style="left:2062px;top:274px;width:176px;height:132px;background:#1b1a19;"></div>
<div class="b" style="left:2062px;top:406px;width:176px;height:39.6px;background:#3b3b39;border-radius:0 0 4px 4px;"></div>
<div class="b" style="left:2242px;top:274px;width:176px;height:132px;background:#1b1a19;"></div>
<div class="b" style="left:2242px;top:406px;width:176px;height:39.6px;background:#3b3b39;border-radius:0 0 4px 4px;"></div>
<div class="b" style="left:2422px;top:274px;width:176px;height:171.6px;background:#111111;border-radius:0 0 4px 4px;"></div>
<div class="b" style="left:2602px;top:274px;width:176px;height:171.6px;background:#111111;border-radius:0 0 4px 4px;"></div>
<div class="b" style="left:2782px;top:274px;width:176px;height:171.6px;background:#111111;border-radius:0 0 4px 4px;"></div>
<div class="b" style="left:0px;top:456px;width:37.5px;height:130px;background:#3b3b39;border-radius:0 4px 4px 0;"></div>
<div class="b t" style="left:0px;top:456px;width:33px;height:130px;font-size:26.5px;line-height:130px;text-align:center;color:#f4f4f4;padding-top:1px;">X</div>
<div class="b" style="left:40px;top:456px;width:40px;height:63.5px;background:#3b3b39;border-radius:4px;"></div>
<div class="b t" style="left:40px;top:457.5px;width:40px;height:63.5px;font-size:24px;line-height:63.5px;text-align:center;color:#f4f4f4;">B</div>
<div class="b t" style="left:40px;top:521.5px;width:40px;height:64.5px;background:#3b3b39;font-size:24px;line-height:64.5px;text-align:center;color:#f4f4f4;border-radius:4px;">S</div>
<div class="b" style="left:82px;top:456px;width:40px;height:130px;background:#3b3b39;border-radius:4px;"></div>
<svg class="b" style="left:82px;top:456px;" width="40" height="130" viewBox="0 0 40 130"><polygon points="14,36.5 24,36.5 19,26.5" fill="#fff"/><polygon points="14,92 24,92 19,102" fill="#fff"/></svg>
<div class="b" style="left:124px;top:456px;width:102px;height:130px;background:#3b3b39;border-radius:4px;overflow:hidden;"><div class="b" style="left:0;top:0;width:102px;height:43.7px;background:#b0ec64"></div></div>
<div class="b t" style="left:124px;top:457px;width:92px;height:43.7px;font-size:23.5px;line-height:43.7px;text-align:left;color:#1c2416;padding-left:10px;">Mult</div>
<div class="b t" style="left:124px;top:501.5px;width:92px;height:43.3px;font-size:23px;line-height:43.3px;text-align:left;color:#f4f4f4;padding-left:10px;">Lit</div>
<div class="b t" style="left:124px;top:545px;width:92px;height:43px;font-size:23px;line-height:43px;text-align:left;color:#f4f4f4;padding-left:10px;">LIA</div>
<svg class="b" style="left:124px;top:456px;" width="102" height="130" viewBox="0 0 102 130"><polygon points="89.5,21 95.5,21 92.5,28" fill="#4a5a32"/><polygon points="89.5,64.5 95.5,64.5 92.5,71.5" fill="#2a2a28"/><polygon points="89.5,107.5 95.5,107.5 92.5,114.5" fill="#2a2a28"/></svg>
<div class="b" style="left:228px;top:456px;width:40px;height:130px;background:#282828;border-radius:4px;"></div>
<div class="b t" style="left:228px;top:456px;width:40px;height:36px;background:#25616f;font-size:17px;line-height:36px;text-align:center;color:#f4f4f4;border-radius:4px;">A</div>
<div class="b" style="left:270px;top:456px;width:48px;height:130px;background:#282828;border-radius:4px;"></div>
<div class="b" style="left:270px;top:456px;width:48px;height:37px;background:#1b1a19;border-radius:4px 4px 0 0;"></div>
<div class="b t" style="left:270px;top:487px;width:48px;height:35.5px;background:#3b3b39;font-size:17px;line-height:35.5px;text-align:center;color:#f4f4f4;border-radius:4px;">AV</div>
<div class="b" style="left:320px;top:456px;width:40px;height:130px;background:#282828;border-radius:4px;"></div>
<div class="b" style="left:320px;top:456px;width:40px;height:70px;background:#1b1a19;border-radius:4px 4px 0 0;"></div>
<div class="b t" style="left:320px;top:520px;width:40px;height:35px;background:#50705a;font-size:17px;line-height:35px;text-align:center;color:#f4f4f4;border-radius:4px;">V</div>
<svg class="b" style="left:362px;top:456px;" width="176" height="132"><use href="#wave" width="176" height="132"/></svg>
<div class="b" style="left:540px;top:456px;width:178px;height:34px;background:#1b1a19;border-radius:4px;"></div>
<div class="b" style="left:540px;top:456px;width:42px;height:34px;background:#2e2e2e;border-radius:4px 0 0 4px;"></div>
<div class="b" style="left:582px;top:456px;width:8px;height:34px;background:#3e3e3c;"></div>
<div class="b" style="left:540px;top:492px;width:178px;height:35.8px;background:#3b3b39;border-radius:4px;overflow:hidden;"></div>
<svg class="b" style="left:540px;top:492px;" width="178" height="35.8" viewBox="0 0 178 35.8"><rect x="13.55" y="11.1" width="19" height="12" rx="5.5" fill="none" stroke="#272726" stroke-width="2.2"/><polygon points="17.55,6.6 17.55,15.6 23.55,11.1" fill="#272726"/><polygon points="28.55,27.6 28.55,18.6 22.55,23.1" fill="#272726"/><rect x="58.05" y="15.6" width="16" height="3" fill="#272726"/><polygon points="54.05,17.1 61.05,10.9 61.05,23.3" fill="#272726"/><polygon points="78.05,17.1 71.05,10.9 71.05,23.3" fill="#272726"/><rect x="104.05" y="15.6" width="13" height="3" fill="#272726"/><polygon points="122.05,17.1 114.55,10.9 114.55,23.3" fill="#272726"/><rect x="146.05" y="15.6" width="11" height="3" fill="#272726"/><rect x="156.05" y="10.1" width="4.3" height="14" fill="#272726"/><rect x="161.85" y="10.1" width="4.3" height="14" fill="#272726"/></svg>
<div class="b" style="left:540px;top:530px;width:178px;height:56px;background:#3b3b39;border-radius:4px;overflow:hidden;"></div>
<svg class="b" style="left:540px;top:530px;" width="178" height="56" viewBox="0 0 178 56"><polygon points="26.5,20.4 26.5,34.4 18,27.4" fill="#272726"/><polygon points="62.5,20.4 62.5,34.4 71,27.4" fill="#272726"/><rect x="105.65" y="20.4" width="3.8" height="14" fill="#272726"/><rect x="113.05" y="20.4" width="3.8" height="14" fill="#272726"/><text x="155.75" y="34" font-size="18.5" font-weight="bold" text-anchor="middle" fill="#272726">R</text></svg>
<div class="b" style="left:720px;top:456px;width:62px;height:130px;background:#1b1a19;border-radius:4px;"></div>
<div class="b t" style="left:720px;top:550px;width:62px;height:36px;background:#50705a;font-size:19px;line-height:36px;text-align:center;color:#d8dcd6;font-weight:bold;border-radius:4px;">T</div>
<div class="b t" style="left:0px;top:588px;width:215px;height:39.6px;background:#b0ec64;font-size:23.5px;line-height:39.6px;text-align:left;color:#1c2416;padding-left:11px;border-radius:0 4px 4px 0;">layer 2</div>
<div class="b" style="left:228px;top:588px;width:132px;height:39.6px;background:#3b3b39;border-radius:4px;"></div>
<div class="b t" style="left:228px;top:588px;width:76px;height:39.6px;font-size:21px;line-height:39.6px;text-align:center;color:#f4f4f4;">A</div>
<div class="b t" style="left:290px;top:588px;width:68px;height:39.6px;font-size:21px;line-height:39.6px;text-align:center;color:#f4f4f4;">B</div>
<div class="b" style="left:362px;top:588px;width:176px;height:39.6px;background:#b0ec64;border-radius:0 0 4px 4px;"></div>
<div class="b t" style="left:362px;top:588px;width:165px;height:39.6px;font-size:23.5px;line-height:39.6px;text-align:left;color:#1c2416;padding-left:11px;">Layer Router</div>
<div class="b" style="left:540px;top:588px;width:178px;height:39.6px;background:#2e2e2e;border-radius:4px;"></div>
<div class="b" style="left:674px;top:588px;width:8px;height:39.6px;background:#3e3e3c;"></div>
<div class="b" style="left:720px;top:588px;width:62px;height:39.6px;background:#3b3b39;border-radius:4px;"></div>
<div class="b t" style="left:720px;top:588px;width:62px;height:39.6px;font-size:21.5px;line-height:39.6px;text-align:center;color:#f4f4f4;transform:scaleX(.82);">Alph</div>
<div class="b" style="left:790px;top:456px;width:4px;height:171.6px;background:#25616f;"></div>
<div class="b" style="left:802px;top:456px;width:176px;height:132px;background:#1b1a19;"></div>
<div class="b" style="left:802px;top:588px;width:176px;height:39.6px;background:#3b3b39;border-radius:0 0 4px 4px;"></div>
<svg class="b" style="left:982px;top:456px;" width="176" height="132"><use href="#wave" width="176" height="132"/></svg>
<div class="b" style="left:982px;top:456px;width:176px;height:132px;box-sizing:border-box;border:4px solid #b0ec64;"></div>
<div class="b" style="left:982px;top:588px;width:176px;height:39.6px;background:#b0ec64;border-radius:0 0 4px 4px;"></div>
<div class="b t" style="left:982px;top:588px;width:165px;height:39.6px;font-size:23.5px;line-height:39.6px;text-align:left;color:#1c2416;padding-left:11px;">Layer Router</div>
<div class="b" style="left:1162px;top:456px;width:176px;height:132px;background:#1b1a19;"></div>
<div class="b" style="left:1162px;top:588px;width:176px;height:39.6px;background:#3b3b39;border-radius:0 0 4px 4px;"></div>
<div class="b" style="left:1342px;top:456px;width:176px;height:132px;background:#1b1a19;"></div>
<div class="b" style="left:1342px;top:588px;width:176px;height:39.6px;background:#3b3b39;border-radius:0 0 4px 4px;"></div>
<div class="b" style="left:1522px;top:456px;width:176px;height:132px;background:#1b1a19;"></div>
<div class="b" style="left:1522px;top:588px;width:176px;height:39.6px;background:#3b3b39;border-radius:0 0 4px 4px;"></div>
<div class="b" style="left:1702px;top:456px;width:176px;height:132px;background:#1b1a19;"></div>
<div class="b" style="left:1702px;top:588px;width:176px;height:39.6px;background:#3b3b39;border-radius:0 0 4px 4px;"></div>
<div class="b" style="left:1882px;top:456px;width:176px;height:132px;background:#1b1a19;"></div>
<div class="b" style="left:1882px;top:588px;width:176px;height:39.6px;background:#3b3b39;border-radius:0 0 4px 4px;"></div>
<div class="b" style="left:2062px;top:456px;width:176px;height:132px;background:#1b1a19;"></div>
<div class="b" style="left:2062px;top:588px;width:176px;height:39.6px;background:#3b3b39;border-radius:0 0 4px 4px;"></div>
<div class="b" style="left:2242px;top:456px;width:176px;height:132px;background:#1b1a19;"></div>
<div class="b" style="left:2242px;top:588px;width:176px;height:39.6px;background:#3b3b39;border-radius:0 0 4px 4px;"></div>
<div class="b" style="left:2422px;top:456px;width:176px;height:171.6px;background:#111111;border-radius:0 0 4px 4px;"></div>
<div class="b" style="left:2602px;top:456px;width:176px;height:171.6px;background:#111111;border-radius:0 0 4px 4px;"></div>
<div class="b" style="left:2782px;top:456px;width:176px;height:171.6px;background:#111111;border-radius:0 0 4px 4px;"></div>
<div class="b" style="left:0px;top:638px;width:37.5px;height:130px;background:#3b3b39;border-radius:0 4px 4px 0;"></div>
<div class="b t" style="left:0px;top:638px;width:33px;height:130px;font-size:26.5px;line-height:130px;text-align:center;color:#f4f4f4;padding-top:1px;">X</div>
<div class="b" style="left:40px;top:638px;width:40px;height:63.5px;background:#3b3b39;border-radius:4px;"></div>
<div class="b t" style="left:40px;top:639.5px;width:40px;height:63.5px;font-size:24px;line-height:63.5px;text-align:center;color:#f4f4f4;">B</div>
<div class="b t" style="left:40px;top:703.5px;width:40px;height:64.5px;background:#3b3b39;font-size:24px;line-height:64.5px;text-align:center;color:#f4f4f4;border-radius:4px;">S</div>
<div class="b" style="left:82px;top:638px;width:40px;height:130px;background:#3b3b39;border-radius:4px;"></div>
<svg class="b" style="left:82px;top:638px;" width="40" height="130" viewBox="0 0 40 130"><polygon points="14,36.5 24,36.5 19,26.5" fill="#fff"/><polygon points="14,92 24,92 19,102" fill="#fff"/></svg>
<div class="b" style="left:124px;top:638px;width:102px;height:130px;background:#3b3b39;border-radius:4px;overflow:hidden;"><div class="b" style="left:0;top:0;width:102px;height:43.7px;background:#b0ec64"></div></div>
<div class="b t" style="left:124px;top:639px;width:92px;height:43.7px;font-size:23.5px;line-height:43.7px;text-align:left;color:#1c2416;padding-left:10px;">Add</div>
<div class="b t" style="left:124px;top:683.5px;width:92px;height:43.3px;font-size:23px;line-height:43.3px;text-align:left;color:#f4f4f4;padding-left:10px;">Lit</div>
<div class="b t" style="left:124px;top:727px;width:92px;height:43px;font-size:23px;line-height:43px;text-align:left;color:#f4f4f4;padding-left:10px;">LIA</div>
<svg class="b" style="left:124px;top:638px;" width="102" height="130" viewBox="0 0 102 130"><polygon points="89.5,21 95.5,21 92.5,28" fill="#4a5a32"/><polygon points="89.5,64.5 95.5,64.5 92.5,71.5" fill="#2a2a28"/><polygon points="89.5,107.5 95.5,107.5 92.5,114.5" fill="#2a2a28"/></svg>
<div class="b" style="left:228px;top:638px;width:40px;height:130px;background:#282828;border-radius:4px;"></div>
<div class="b t" style="left:228px;top:638px;width:40px;height:36px;background:#25616f;font-size:17px;line-height:36px;text-align:center;color:#f4f4f4;border-radius:4px;">A</div>
<div class="b" style="left:270px;top:638px;width:48px;height:130px;background:#282828;border-radius:4px;"></div>
<div class="b t" style="left:270px;top:638px;width:48px;height:35.5px;background:#3b3b39;font-size:17px;line-height:35.5px;text-align:center;color:#f4f4f4;border-radius:4px;">AV</div>
<div class="b" style="left:320px;top:638px;width:40px;height:130px;background:#282828;border-radius:4px;"></div>
<div class="b t" style="left:320px;top:638px;width:40px;height:35px;background:#50705a;font-size:17px;line-height:35px;text-align:center;color:#f4f4f4;border-radius:4px;">V</div>
<svg class="b" style="left:362px;top:638px;" width="176" height="132"><use href="#cloud" width="176" height="132"/></svg>
<div class="b" style="left:540px;top:638px;width:178px;height:34px;background:#1b1a19;border-radius:4px;"></div>
<div class="b" style="left:540px;top:638px;width:42px;height:34px;background:#282828;border-radius:4px 0 0 4px;"></div>
<div class="b" style="left:582px;top:638px;width:8px;height:34px;background:#50705a;"></div>
<div class="b" style="left:540px;top:674px;width:178px;height:35.8px;background:#3b3b39;border-radius:4px;overflow:hidden;"><div class="b" style="left:0px;top:0;width:44.5px;height:35.8px;background:#b0ec64"></div></div>
<svg class="b" style="left:540px;top:674px;" width="178" height="35.8" viewBox="0 0 178 35.8"><rect x="13.55" y="11.1" width="19" height="12" rx="5.5" fill="none" stroke="#3a4038" stroke-width="2.2"/><polygon points="17.55,6.6 17.55,15.6 23.55,11.1" fill="#3a4038"/><polygon points="28.55,27.6 28.55,18.6 22.55,23.1" fill="#3a4038"/><rect x="58.05" y="15.6" width="16" height="3" fill="#fff"/><polygon points="54.05,17.1 61.05,10.9 61.05,23.3" fill="#fff"/><polygon points="78.05,17.1 71.05,10.9 71.05,23.3" fill="#fff"/><rect x="104.05" y="15.6" width="13" height="3" fill="#fff"/><polygon points="122.05,17.1 114.55,10.9 114.55,23.3" fill="#fff"/><rect x="146.05" y="15.6" width="11" height="3" fill="#fff"/><rect x="156.05" y="10.1" width="4.3" height="14" fill="#fff"/><rect x="161.85" y="10.1" width="4.3" height="14" fill="#fff"/></svg>
<div class="b" style="left:540px;top:712px;width:178px;height:56px;background:#3b3b39;border-radius:4px;overflow:hidden;"><div class="b" style="left:44.5px;top:0;width:44.5px;height:56px;background:#b0ec64"></div></div>
<svg class="b" style="left:540px;top:712px;" width="178" height="56" viewBox="0 0 178 56"><polygon points="26.5,20.4 26.5,34.4 18,27.4" fill="#fff"/><polygon points="62.5,20.4 62.5,34.4 71,27.4" fill="#33363a"/><rect x="105.65" y="20.4" width="3.8" height="14" fill="#fff"/><rect x="113.05" y="20.4" width="3.8" height="14" fill="#fff"/><text x="155.75" y="34" font-size="18.5" font-weight="bold" text-anchor="middle" fill="#fff">R</text></svg>
<div class="b" style="left:720px;top:638px;width:62px;height:130px;background:#1b1a19;border-radius:4px;"></div>
<div class="b t" style="left:720px;top:732px;width:62px;height:36px;background:#50705a;font-size:19px;line-height:36px;text-align:center;color:#d8dcd6;font-weight:bold;border-radius:4px;">T</div>
<div class="b t" style="left:0px;top:770px;width:215px;height:39.6px;background:#3b3b39;font-size:23.5px;line-height:39.6px;text-align:left;color:#f4f4f4;padding-left:11px;border-radius:0 4px 4px 0;">layer 1</div>
<div class="b" style="left:228px;top:770px;width:132px;height:39.6px;background:#3b3b39;border-radius:4px;"></div>
<div class="b t" style="left:228px;top:770px;width:76px;height:39.6px;font-size:21px;line-height:39.6px;text-align:center;color:#f4f4f4;">A</div>
<div class="b t" style="left:290px;top:770px;width:68px;height:39.6px;font-size:21px;line-height:39.6px;text-align:center;color:#f4f4f4;">B</div>
<div class="b" style="left:362px;top:770px;width:176px;height:39.6px;background:#3b3b39;border-radius:0 0 4px 4px;"></div>
<div class="b t" style="left:362px;top:770px;width:165px;height:39.6px;font-size:23px;line-height:39.6px;text-align:left;color:#f4f4f4;padding-left:11px;">stormcloud 16x</div>
<div class="b" style="left:540px;top:770px;width:178px;height:39.6px;background:#3b3b39;border-radius:4px;"></div>
<div class="b" style="left:580px;top:770px;width:8px;height:39.6px;background:#50705a;"></div>
<div class="b" style="left:720px;top:770px;width:62px;height:39.6px;background:#3b3b39;border-radius:4px;"></div>
<div class="b t" style="left:720px;top:770px;width:62px;height:39.6px;font-size:21.5px;line-height:39.6px;text-align:center;color:#f4f4f4;transform:scaleX(.82);">Alph</div>
<div class="b" style="left:790px;top:638px;width:4px;height:171.6px;background:#25616f;"></div>
<div class="b" style="left:802px;top:638px;width:176px;height:132px;background:#1b1a19;"></div>
<div class="b" style="left:802px;top:770px;width:176px;height:39.6px;background:#3b3b39;border-radius:0 0 4px 4px;"></div>
<svg class="b" style="left:982px;top:638px;" width="176" height="132"><use href="#cloud" width="176" height="132"/></svg>
<div class="b" style="left:982px;top:638px;width:176px;height:132px;box-sizing:border-box;border:4px solid #b0ec64;"></div>
<div class="b" style="left:982px;top:770px;width:176px;height:39.6px;background:#3b3b39;border-radius:0 0 4px 4px;"></div>
<div class="b t" style="left:982px;top:770px;width:165px;height:39.6px;font-size:23px;line-height:39.6px;text-align:left;color:#f4f4f4;padding-left:11px;">stormcloud 16x</div>
<div class="b" style="left:1162px;top:638px;width:176px;height:132px;background:#1b1a19;"></div>
<div class="b" style="left:1162px;top:770px;width:176px;height:39.6px;background:#3b3b39;border-radius:0 0 4px 4px;"></div>
<div class="b" style="left:1164px;top:641px;width:172px;height:126px;box-sizing:border-box;border:3px solid #4a4a4a;"></div>
<div class="b" style="left:1342px;top:638px;width:176px;height:132px;background:#1b1a19;"></div>
<div class="b" style="left:1342px;top:770px;width:176px;height:39.6px;background:#3b3b39;border-radius:0 0 4px 4px;"></div>
<div class="b" style="left:1522px;top:638px;width:176px;height:132px;background:#1b1a19;"></div>
<div class="b" style="left:1522px;top:770px;width:176px;height:39.6px;background:#3b3b39;border-radius:0 0 4px 4px;"></div>
<div class="b" style="left:1702px;top:638px;width:176px;height:132px;background:#1b1a19;"></div>
<div class="b" style="left:1702px;top:770px;width:176px;height:39.6px;background:#3b3b39;border-radius:0 0 4px 4px;"></div>
<div class="b" style="left:1882px;top:638px;width:176px;height:132px;background:#1b1a19;"></div>
<div class="b" style="left:1882px;top:770px;width:176px;height:39.6px;background:#3b3b39;border-radius:0 0 4px 4px;"></div>
<div class="b" style="left:2062px;top:638px;width:176px;height:132px;background:#1b1a19;"></div>
<div class="b" style="left:2062px;top:770px;width:176px;height:39.6px;background:#3b3b39;border-radius:0 0 4px 4px;"></div>
<div class="b" style="left:2242px;top:638px;width:176px;height:132px;background:#1b1a19;"></div>
<div class="b" style="left:2242px;top:770px;width:176px;height:39.6px;background:#3b3b39;border-radius:0 0 4px 4px;"></div>
<div class="b" style="left:2422px;top:638px;width:176px;height:171.6px;background:#111111;border-radius:0 0 4px 4px;"></div>
<div class="b" style="left:2602px;top:638px;width:176px;height:171.6px;background:#111111;border-radius:0 0 4px 4px;"></div>
<div class="b" style="left:2782px;top:638px;width:176px;height:171.6px;background:#111111;border-radius:0 0 4px 4px;"></div>
<div class="b" style="left:2px;top:818.2px;width:780px;height:39.6px;background:#0a0a0a;border-radius:4px;"></div>
<div class="b" style="left:2px;top:818.2px;width:37px;height:39.6px;background:#3b3b39;border-radius:4px 0 0 4px;"></div>
<div class="b t" style="left:4px;top:818.2px;width:37px;height:39.6px;font-size:20px;line-height:39.6px;text-align:center;color:#f4f4f4;">A</div>
<div class="b t" style="left:743.5px;top:818.2px;width:38.5px;height:39.6px;background:#3b3b39;font-size:20px;line-height:39.6px;text-align:center;color:#f4f4f4;border-radius:0 4px 4px 0;">B</div>
<div class="b" style="left:380px;top:818.2px;width:24px;height:39.6px;background:#50705a;"></div>
<div class="b t" style="left:802px;top:818.2px;width:274px;height:39.6px;background:#2b2b2b;font-size:23.5px;line-height:39.6px;text-align:center;color:#f4f4f4;border-radius:0 0 4px 4px;">Silhouette Dancers</div>
<div class="b t" style="left:1078px;top:818.2px;width:123.5px;height:39.6px;background:#131313;font-size:23.5px;line-height:39.6px;text-align:center;color:#f4f4f4;border-radius:0 0 4px 4px;">empty</div>
<div class="b t" style="left:1203.5px;top:818.2px;width:124px;height:39.6px;background:#131313;font-size:23.5px;line-height:39.6px;text-align:center;color:#f4f4f4;border-radius:0 0 4px 4px;">empty</div>
<div class="b" style="left:0px;top:864px;width:2880px;height:72px;background:linear-gradient(#242424,#1c1c1c 40%,#141414);"></div>
<div class="b t" style="left:19px;top:880.3px;width:50px;height:36px;font-size:21px;line-height:36px;text-align:left;color:#f4f4f4;">BPM</div>
<div class="b t" style="left:87px;top:880.3px;width:90px;height:36px;font-size:25.5px;line-height:36px;text-align:left;color:#f4f4f4;">120.00</div>
<div class="b t" style="left:180px;top:881.8px;width:51px;height:36px;background:#3b3b39;font-size:20px;line-height:36px;text-align:center;color:#f4f4f4;border-radius:6px;">-&nbsp;&nbsp;+</div>
<div class="b t" style="left:246px;top:881.8px;width:88px;height:36px;background:#3b3b39;font-size:20px;line-height:36px;text-align:center;color:#f4f4f4;border-radius:6px;">/2&nbsp;&nbsp;&nbsp;*2</div>
<div class="b" style="left:348px;top:881.8px;width:270px;height:36px;background:#3b3b39;border-radius:6px;"></div>
<div class="b t" style="left:348px;top:881.8px;width:92px;height:36px;font-size:19.5px;line-height:36px;text-align:center;color:#f4f4f4;">Tap</div>
<div class="b t" style="left:438px;top:881.8px;width:90px;height:36px;font-size:19.5px;line-height:36px;text-align:center;color:#f4f4f4;">Resync</div>
<div class="b t" style="left:528px;top:881.8px;width:86px;height:36px;font-size:19.5px;line-height:36px;text-align:center;color:#f4f4f4;">Pause</div>
<div class="b" style="left:632px;top:881.8px;width:36px;height:36px;background:#3b3b39;border-radius:6px;"></div>
<div class="b" style="left:632px;top:881.8px;width:18px;height:18px;background:#b0ec64;border-radius:4px 0 0 0;"></div>
<div class="b" style="left:2740px;top:881.8px;width:124px;height:36px;background:#3a3a3a;border-radius:8px;"></div>
<div class="b" style="left:2751.5px;top:892.8px;width:14px;height:14px;background:#fff;border-radius:50%;"></div>
<div class="b t" style="left:2771px;top:881.8px;width:70px;height:36px;font-size:20px;line-height:36px;text-align:left;color:#f4f4f4;">Record</div>
<div class="b" style="left:0px;top:942px;width:565.5px;height:468px;background:#0b0b0b;border-radius:4px;"></div>
<div class="b t" style="left:17.5px;top:939px;width:300px;height:46px;font-size:25px;line-height:46px;text-align:left;color:#f4f4f4;">Output Monitor</div>
<div class="b" style="left:4px;top:986px;width:558px;height:418px;background:#000;"></div>
<svg class="b" style="left:4px;top:986px;overflow:hidden" width="558" height="418" viewBox="4 986 558 418"><defs><clipPath id="silc"><path d="M481,980 C479.7,984.0 480.7,981.3 477,992 C473.3,1002.7 474.3,997.5 470,1012 C465.7,1026.5 467.8,1018.8 464,1035.5 C460.2,1052.2 459.8,1049.2 458.5,1062 C457.2,1074.8 462.2,1067.7 460,1074 C457.8,1080.3 457.7,1077.5 452,1081 C446.3,1084.5 455.1,1081.2 442.8,1084.5 C430.5,1087.8 431.6,1086.5 415,1091 C398.4,1095.5 403.3,1093.0 393,1098 C382.7,1103.0 388.0,1099.3 384,1106 C380.0,1112.7 380.7,1109.3 381,1118 C381.3,1126.7 380.5,1121.2 385,1132 C389.5,1142.8 387.4,1138.3 394.4,1150.3 C401.4,1162.3 397.9,1156.9 406,1168 C414.1,1179.1 409.9,1173.3 418.6,1183.6 C427.3,1193.9 423.9,1191.7 432,1199 C440.1,1206.3 436.5,1202.2 443,1205.5 C449.5,1208.8 447.2,1204.2 451.5,1209 C455.8,1213.8 453.4,1211.7 456,1220 C458.6,1228.3 458.7,1220.0 459.4,1234 C460.1,1248.0 458.0,1246.0 458.2,1262 C458.4,1278.0 458.1,1268.9 460,1282 C461.9,1295.1 460.7,1282.8 464,1301.4 C467.3,1320.0 465.3,1319.2 470,1337.7 C474.7,1356.2 475.8,1342.9 478,1357 C480.2,1371.1 477.8,1362.3 476.5,1380 C475.2,1397.7 474.8,1400.0 474,1410  L570,1410 L570,980 Z"/></clipPath>
<linearGradient id="og" x1="0" y1="0" x2="0" y2="1">
<stop offset="0" stop-color="#cef650"/><stop offset="0.04" stop-color="#a6f25c"/><stop offset="0.1" stop-color="#58eaa2"/>
<stop offset="0.19" stop-color="#64ec8e"/><stop offset="0.26" stop-color="#a0f84c"/><stop offset="0.36" stop-color="#9ef84c"/>
<stop offset="0.42" stop-color="#d2f850"/><stop offset="0.455" stop-color="#84f04e"/><stop offset="0.52" stop-color="#6cee50"/>
<stop offset="0.56" stop-color="#c8f452"/><stop offset="0.6" stop-color="#f0e45a"/><stop offset="0.64" stop-color="#e4f656"/>
<stop offset="0.7" stop-color="#b4f84e"/><stop offset="0.77" stop-color="#8af068"/><stop offset="0.83" stop-color="#5ce8a4"/>
<stop offset="1" stop-color="#58e6aa"/>
</linearGradient></defs>
<g filter="url(#bl15)"><g clip-path="url(#silc)">
<rect x="370" y="980" width="200" height="430" fill="url(#og)"/>
<g filter="url(#bl5)">
<path d="M385,1100 L450,1090 L520,1120 L470,1170 L410,1160 Z" fill="#8cf05a" opacity=".7"/>
<path d="M452,1182 L500,1172 L575,1166 L575,1218 L520,1214 L480,1200 Z" fill="#30e84a"/>
<path d="M470,1232 L500,1224 L490,1242 L474,1244 Z M526,1234 L566,1228 L566,1244 L540,1244 Z M450,1186 L476,1184 L470,1194 Z" fill="#f4724c"/>
<path d="M540,1000 L566,994 L566,1012 Z" fill="#f4724c"/>
</g>
<g filter="url(#bl15)">
<path d="M468,1342 L500,1338 L530,1349 L566,1339 L566,1352 L540,1354 L520,1366 L504,1392 L480,1392 L476,1362 Z" fill="#40dcf4"/>
<path d="M486,1373 L505,1369 L520,1357 L545,1351 L566,1345 L566,1410 L470,1410 L478,1386 Z" fill="#5a2ae0"/>
<ellipse cx="509" cy="1386" rx="11" ry="4.5" fill="#6ce6a0" transform="rotate(35 509 1386)"/>
<path d="M484,1370 C492,1376 500,1380 504,1392" stroke="#40dcf4" stroke-width="4" fill="none"/>
</g>
</g></g>
<ellipse cx="441.5" cy="1174.5" rx="4" ry="8" fill="#000" transform="rotate(-25 441.5 1174.5)"/></svg>
<div class="b t" style="left:15px;top:997px;width:200px;height:24px;font-size:18px;line-height:24px;text-align:left;color:#e8e8e8;letter-spacing:2.3px;font-weight:bold;">Fps: 59.98</div>
<div class="b" style="left:0px;top:1414.5px;width:565.5px;height:183px;background:#0b0b0b;border-radius:4px;"></div>
<svg class="b" style="left:0px;top:1414.5px;" width="45" height="40" viewBox="0 0 45 40"><polygon points="15.75,15.5 31.25,15.5 23.5,25.5" fill="#7a7a7a"/></svg>
<div class="b t" style="left:45.5px;top:1414.5px;width:400px;height:40px;font-size:23.5px;line-height:40px;text-align:left;color:#f4f4f4;word-spacing:2.2px;">Preview Monitor / Layer / layer 2</div>
<div class="b" style="left:4px;top:1458px;width:180px;height:136px;background:#000;"></div>
<svg class="b" style="left:0;top:1450px" width="200" height="150" viewBox="0 1450 200 150"><path d="M4,1458 L157.4,1458 L153.8,1472.5 L151.1,1489 L137.4,1491.2 L128.6,1495.5 L126.2,1502.1 L130.8,1512 L139.6,1525.2 L148.9,1529.6 L151.1,1543.9 L151.6,1559.3 L154.9,1574.7 L157.1,1583.5 L156,1594 L4,1594 Z" fill="#fff" filter="url(#bl1)"/><circle cx="145" cy="1519.2" r="1.6" fill="#ddd"/></svg>
<div class="b" style="left:572px;top:942px;width:576px;height:655.5px;background:#0b0b0b;"></div>
<div class="b" style="left:572px;top:942px;width:576px;height:64px;background:#161514;"></div>
<div class="b t" style="left:598.5px;top:950px;width:400px;height:46px;font-size:24.5px;line-height:46px;text-align:left;color:#f4f4f4;font-weight:bold;letter-spacing:.3px;">untitled (640 x 480)</div>
<div class="b" style="left:1078px;top:958px;width:54px;height:28px;background:#3b3b39;border-radius:4px;"></div>
<svg class="b" style="left:1078px;top:958px;" width="54" height="28" viewBox="0 0 54 28"><rect x="18.3" y="4.7" width="3.4" height="3.6" fill="#d6d6d6" transform="rotate(0 20 14)"/><rect x="18.3" y="4.7" width="3.4" height="3.6" fill="#d6d6d6" transform="rotate(45 20 14)"/><rect x="18.3" y="4.7" width="3.4" height="3.6" fill="#d6d6d6" transform="rotate(90 20 14)"/><rect x="18.3" y="4.7" width="3.4" height="3.6" fill="#d6d6d6" transform="rotate(135 20 14)"/><rect x="18.3" y="4.7" width="3.4" height="3.6" fill="#d6d6d6" transform="rotate(180 20 14)"/><rect x="18.3" y="4.7" width="3.4" height="3.6" fill="#d6d6d6" transform="rotate(225 20 14)"/><rect x="18.3" y="4.7" width="3.4" height="3.6" fill="#d6d6d6" transform="rotate(270 20 14)"/><rect x="18.3" y="4.7" width="3.4" height="3.6" fill="#d6d6d6" transform="rotate(315 20 14)"/><circle cx="20" cy="14" r="5.1" fill="none" stroke="#dadada" stroke-width="3"/><polygon points="33.05,11.8 41.55,11.8 37.3,16.8" fill="#e8e8e8"/></svg>
<div class="b" style="left:572px;top:1008px;width:576px;height:45.6px;background:#333333;"></div>
<svg class="b" style="left:572px;top:1008px;" width="40" height="46" viewBox="0 0 40 46"><polygon points="10.5,15 10.5,30 22.5,22.5" fill="#7a7a7a"/></svg>
<div class="b t" style="left:610.5px;top:1008px;width:536px;height:45.6px;font-size:24px;line-height:45.6px;text-align:left;color:#f4f4f4;">Dashboard</div>
<div class="b" style="left:572px;top:1056px;width:576px;height:45.6px;background:#333333;"></div>
<svg class="b" style="left:572px;top:1056px;" width="40" height="46" viewBox="0 0 40 46"><polygon points="8.75,19 24.25,19 16.5,29" fill="#7a7a7a"/></svg>
<div class="b t" style="left:610.5px;top:1056px;width:536px;height:45.6px;font-size:24px;line-height:45.6px;text-align:left;color:#f4f4f4;">Audio</div>
<div class="b" style="left:572px;top:1104px;width:174px;height:45.6px;background:#161514;"></div>
<div class="b" style="left:748px;top:1104px;width:400px;height:45.6px;background:#161514;"></div>
<div class="b t" style="left:432px;top:1104px;width:300px;height:45.6px;font-size:24px;line-height:45.6px;text-align:right;color:#f4f4f4;">Volume</div>
<div class="b t" style="left:760.5px;top:1104px;width:120px;height:45.6px;font-size:24px;line-height:45.6px;text-align:left;color:#f4f4f4;">0.00</div>
<div class="b" style="left:856.3px;top:1114.7px;width:281.5px;height:23px;background:#0b0b0b;border-radius:4px;overflow:hidden;"><div class="b" style="left:0;top:0;width:211.5px;height:23px;background:#2b2b2b"></div><div class="b" style="left:209.5px;top:0;width:8px;height:23px;background:#2b6b7c"></div></div>
<div class="b" style="left:572px;top:1152px;width:174px;height:45.6px;background:#161514;"></div>
<div class="b" style="left:748px;top:1152px;width:400px;height:45.6px;background:#161514;"></div>
<div class="b t" style="left:432px;top:1152px;width:300px;height:45.6px;font-size:24px;line-height:45.6px;text-align:right;color:#f4f4f4;">Pan</div>
<div class="b t" style="left:760.5px;top:1152px;width:120px;height:45.6px;font-size:24px;line-height:45.6px;text-align:left;color:#f4f4f4;">0.00</div>
<div class="b" style="left:856.3px;top:1162.7px;width:281.5px;height:23px;background:#0b0b0b;border-radius:4px;overflow:hidden;"><div class="b" style="left:135.7px;top:0;width:8px;height:23px;background:#2b6b7c"></div></div>
<div class="b" style="left:572px;top:1200px;width:576px;height:45.6px;background:#333333;"></div>
<svg class="b" style="left:572px;top:1200px;" width="40" height="46" viewBox="0 0 40 46"><polygon points="8.75,19 24.25,19 16.5,29" fill="#7a7a7a"/></svg>
<div class="b t" style="left:610.5px;top:1200px;width:536px;height:45.6px;font-size:24px;line-height:45.6px;text-align:left;color:#f4f4f4;">Transform</div>
<svg class="b" style="left:1096px;top:1213px;" width="36" height="20" viewBox="0 0 36 20"><rect x="0" y="1" width="36" height="1.6" fill="#4c4c4c"/><rect x="0" y="9.2" width="36" height="1.6" fill="#4c4c4c"/><rect x="0" y="17.4" width="36" height="1.6" fill="#4c4c4c"/></svg>
<div class="b" style="left:572px;top:1248px;width:174px;height:45.6px;background:#161514;"></div>
<div class="b" style="left:748px;top:1248px;width:400px;height:45.6px;background:#161514;"></div>
<div class="b t" style="left:432px;top:1248px;width:300px;height:45.6px;font-size:24px;line-height:45.6px;text-align:right;color:#f4f4f4;transform:scaleX(0.96);transform-origin:100% 50%;white-space:nowrap;">Fade Out</div>
<div class="b t" style="left:760.5px;top:1248px;width:120px;height:45.6px;font-size:24px;line-height:45.6px;text-align:left;color:#f4f4f4;">1.00</div>
<div class="b" style="left:856.3px;top:1258.7px;width:281.5px;height:23px;background:#0b0b0b;border-radius:4px;overflow:hidden;"><div class="b" style="left:0;top:0;width:275.5px;height:23px;background:#2b2b2b"></div><div class="b" style="left:273.5px;top:0;width:8px;height:23px;background:#50705a"></div></div>
<div class="b" style="left:572px;top:1296px;width:174px;height:45.6px;background:#161514;"></div>
<div class="b" style="left:748px;top:1296px;width:400px;height:45.6px;background:#161514;"></div>
<div class="b t" style="left:432px;top:1296px;width:300px;height:45.6px;font-size:24px;line-height:45.6px;text-align:right;color:#f4f4f4;">Scale</div>
<div class="b t" style="left:760.5px;top:1296px;width:120px;height:45.6px;font-size:24px;line-height:45.6px;text-align:left;color:#f4f4f4;transform:scaleX(0.7);transform-origin:0 50%;white-space:nowrap;">100.00 %</div>
<div class="b" style="left:856.3px;top:1306.7px;width:281.5px;height:23px;background:#0b0b0b;border-radius:4px;overflow:hidden;"><div class="b" style="left:0;top:0;width:27.7px;height:23px;background:#2b2b2b"></div><div class="b" style="left:25.7px;top:0;width:8px;height:23px;background:#50705a"></div></div>
<div class="b" style="left:572px;top:1344px;width:174px;height:45.6px;background:#161514;"></div>
<div class="b" style="left:748px;top:1344px;width:400px;height:45.6px;background:#161514;"></div>
<div class="b t" style="left:432px;top:1344px;width:300px;height:45.6px;font-size:24px;line-height:45.6px;text-align:right;color:#f4f4f4;transform:scaleX(0.95);transform-origin:100% 50%;white-space:nowrap;">Rotate X</div>
<div class="b t" style="left:760.5px;top:1344px;width:120px;height:45.6px;font-size:24px;line-height:45.6px;text-align:left;color:#f4f4f4;">0.00 °</div>
<div class="b" style="left:856.3px;top:1354.7px;width:281.5px;height:23px;background:#0b0b0b;border-radius:4px;overflow:hidden;"><div class="b" style="left:135.7px;top:0;width:8px;height:23px;background:#50705a"></div></div>
<div class="b" style="left:572px;top:1392px;width:174px;height:45.6px;background:#161514;"></div>
<div class="b" style="left:748px;top:1392px;width:400px;height:45.6px;background:#161514;"></div>
<div class="b t" style="left:432px;top:1392px;width:300px;height:45.6px;font-size:24px;line-height:45.6px;text-align:right;color:#f4f4f4;transform:scaleX(0.95);transform-origin:100% 50%;white-space:nowrap;">Rotate Y</div>
<div class="b t" style="left:760.5px;top:1392px;width:120px;height:45.6px;font-size:24px;line-height:45.6px;text-align:left;color:#f4f4f4;">0.00 °</div>
<div class="b" style="left:856.3px;top:1402.7px;width:281.5px;height:23px;background:#0b0b0b;border-radius:4px;overflow:hidden;"><div class="b" style="left:135.7px;top:0;width:8px;height:23px;background:#50705a"></div></div>
<div class="b" style="left:572px;top:1440px;width:174px;height:45.6px;background:#161514;"></div>
<div class="b" style="left:748px;top:1440px;width:400px;height:45.6px;background:#161514;"></div>
<div class="b t" style="left:432px;top:1440px;width:300px;height:45.6px;font-size:24px;line-height:45.6px;text-align:right;color:#f4f4f4;transform:scaleX(0.95);transform-origin:100% 50%;white-space:nowrap;">Rotate Z</div>
<div class="b t" style="left:760.5px;top:1440px;width:120px;height:45.6px;font-size:24px;line-height:45.6px;text-align:left;color:#f4f4f4;">0.00 °</div>
<div class="b" style="left:856.3px;top:1450.7px;width:281.5px;height:23px;background:#0b0b0b;border-radius:4px;overflow:hidden;"><div class="b" style="left:135.7px;top:0;width:8px;height:23px;background:#50705a"></div></div>
<div class="b t" style="left:572px;top:1520px;width:576px;height:46px;font-size:24px;line-height:46px;text-align:center;color:#232323;letter-spacing:.2px;">Drop effect or mask here.</div>
<div class="b" style="left:1154px;top:942px;width:576px;height:655.5px;background:#0b0b0b;"></div>
<div class="b" style="left:1154px;top:942px;width:576px;height:64px;background:#161514;"></div>
<div class="b" style="left:1170px;top:954.5px;width:246px;height:35px;background:#060606;box-sizing:border-box;border:1.5px solid #5a5a5a;"></div>
<div class="b t" style="left:1170px;top:954.5px;width:236px;height:35px;font-size:24px;line-height:35px;text-align:left;color:#f4f4f4;padding-left:10px;">layer 2</div>
<div class="b" style="left:1660px;top:958px;width:54px;height:28px;background:#3b3b39;border-radius:4px;"></div>
<svg class="b" style="left:1660px;top:958px;" width="54" height="28" viewBox="0 0 54 28"><rect x="18.3" y="4.7" width="3.4" height="3.6" fill="#d6d6d6" transform="rotate(0 20 14)"/><rect x="18.3" y="4.7" width="3.4" height="3.6" fill="#d6d6d6" transform="rotate(45 20 14)"/><rect x="18.3" y="4.7" width="3.4" height="3.6" fill="#d6d6d6" transform="rotate(90 20 14)"/><rect x="18.3" y="4.7" width="3.4" height="3.6" fill="#d6d6d6" transform="rotate(135 20 14)"/><rect x="18.3" y="4.7" width="3.4" height="3.6" fill="#d6d6d6" transform="rotate(180 20 14)"/><rect x="18.3" y="4.7" width="3.4" height="3.6" fill="#d6d6d6" transform="rotate(225 20 14)"/><rect x="18.3" y="4.7" width="3.4" height="3.6" fill="#d6d6d6" transform="rotate(270 20 14)"/><rect x="18.3" y="4.7" width="3.4" height="3.6" fill="#d6d6d6" transform="rotate(315 20 14)"/><circle cx="20" cy="14" r="5.1" fill="none" stroke="#dadada" stroke-width="3"/><polygon points="33.05,11.8 41.55,11.8 37.3,16.8" fill="#e8e8e8"/></svg>
<div class="b" style="left:1154px;top:1008px;width:576px;height:45.6px;background:#333333;"></div>
<svg class="b" style="left:1154px;top:1008px;" width="40" height="46" viewBox="0 0 40 46"><polygon points="10.5,15 10.5,30 22.5,22.5" fill="#7a7a7a"/></svg>
<div class="b t" style="left:1192.5px;top:1008px;width:536px;height:45.6px;font-size:24px;line-height:45.6px;text-align:left;color:#f4f4f4;">Dashboard</div>
<div class="b" style="left:1154px;top:1056px;width:576px;height:45.6px;background:#333333;"></div>
<svg class="b" style="left:1154px;top:1056px;" width="40" height="46" viewBox="0 0 40 46"><polygon points="10.5,15 10.5,30 22.5,22.5" fill="#7a7a7a"/></svg>
<div class="b t" style="left:1192.5px;top:1056px;width:536px;height:45.6px;font-size:24px;line-height:45.6px;text-align:left;color:#f4f4f4;">Auto Pilot</div>
<div class="b" style="left:1154px;top:1104px;width:556px;height:45.6px;background:#333333;"></div>
<svg class="b" style="left:1154px;top:1104px;" width="40" height="46" viewBox="0 0 40 46"><polygon points="8.75,19 24.25,19 16.5,29" fill="#7a7a7a"/></svg>
<div class="b t" style="left:1192.5px;top:1104px;width:516px;height:45.6px;font-size:24px;line-height:45.6px;text-align:left;color:#f4f4f4;">Audio</div>
<div class="b" style="left:1154px;top:1152px;width:174px;height:45.6px;background:#161514;"></div>
<div class="b" style="left:1330px;top:1152px;width:380px;height:45.6px;background:#161514;"></div>
<div class="b t" style="left:1014px;top:1152px;width:300px;height:45.6px;font-size:24px;line-height:45.6px;text-align:right;color:#f4f4f4;">Volume</div>
<div class="b t" style="left:1342.5px;top:1152px;width:120px;height:45.6px;font-size:24px;line-height:45.6px;text-align:left;color:#f4f4f4;">1.00</div>
<div class="b" style="left:1438.3px;top:1162.7px;width:261.5px;height:23px;background:#0b0b0b;border-radius:4px;overflow:hidden;"><div class="b" style="left:0;top:0;width:255.5px;height:23px;background:#2b2b2b"></div><div class="b" style="left:253.5px;top:0;width:8px;height:23px;background:#2b6b7c"></div></div>
<div class="b" style="left:1154px;top:1200px;width:174px;height:45.6px;background:#161514;"></div>
<div class="b" style="left:1330px;top:1200px;width:380px;height:45.6px;background:#161514;"></div>
<div class="b t" style="left:1014px;top:1200px;width:300px;height:45.6px;font-size:24px;line-height:45.6px;text-align:right;color:#f4f4f4;">Pan</div>
<div class="b t" style="left:1342.5px;top:1200px;width:120px;height:45.6px;font-size:24px;line-height:45.6px;text-align:left;color:#f4f4f4;">0.00</div>
<div class="b" style="left:1438.3px;top:1210.7px;width:261.5px;height:23px;background:#0b0b0b;border-radius:4px;overflow:hidden;"><div class="b" style="left:125.8px;top:0;width:8px;height:23px;background:#2b6b7c"></div></div>
<div class="b" style="left:1154px;top:1248px;width:556px;height:45.6px;background:#333333;"></div>
<svg class="b" style="left:1154px;top:1248px;" width="40" height="46" viewBox="0 0 40 46"><polygon points="8.75,19 24.25,19 16.5,29" fill="#7a7a7a"/></svg>
<div class="b t" style="left:1192.5px;top:1248px;width:516px;height:45.6px;font-size:24px;line-height:45.6px;text-align:left;color:#f4f4f4;">Video Effects (1)</div>
<svg class="b" style="left:1658px;top:1261px;" width="36" height="20" viewBox="0 0 36 20"><rect x="0" y="1" width="36" height="1.6" fill="#4c4c4c"/><rect x="0" y="9.2" width="36" height="1.6" fill="#4c4c4c"/><rect x="0" y="17.4" width="36" height="1.6" fill="#4c4c4c"/></svg>
<div class="b" style="left:1154px;top:1296px;width:556px;height:45.6px;background:#344334;"></div>
<svg class="b" style="left:1154px;top:1296px;" width="40" height="46" viewBox="0 0 40 46"><polygon points="8.75,19 24.25,19 16.5,29" fill="#7a7a7a"/></svg>
<div class="b t" style="left:1192.5px;top:1296px;width:516px;height:45.6px;font-size:24px;line-height:45.6px;text-align:left;color:#f4f4f4;transform:scaleX(0.93);transform-origin:0 50%;">Invert RGB</div>
<svg class="b" style="left:1658px;top:1309px;" width="36" height="20" viewBox="0 0 36 20"><rect x="0" y="1" width="36" height="1.6" fill="#4c4c4c"/><rect x="0" y="9.2" width="36" height="1.6" fill="#4c4c4c"/><rect x="0" y="17.4" width="36" height="1.6" fill="#4c4c4c"/></svg>
<div class="b" style="left:1430.5px;top:1306px;width:119.5px;height:25.5px;background:#3c403a;border-radius:7px;"></div>
<div class="b t" style="left:1430.5px;top:1306px;width:112.5px;height:26.5px;font-size:23px;line-height:26.5px;text-align:left;color:#f4f4f4;padding-left:7px;">Presets</div>
<svg class="b" style="left:1530px;top:1306px;" width="20" height="25.5" viewBox="0 0 20 25.5"><polygon points="5,11.5 11,11.5 8,18" fill="#232323"/></svg>
<div class="b t" style="left:1558px;top:1303.5px;width:35.5px;height:30px;background:#3d423c;font-size:14px;line-height:30px;text-align:center;color:#f4f4f4;border-radius:7px;font-weight:bold;">B</div>
<div class="b t" style="left:1602px;top:1303.5px;width:35.5px;height:30px;background:#3d423c;font-size:16px;line-height:30px;text-align:center;color:#f4f4f4;border-radius:7px;font-weight:bold;">X</div>
<div class="b" style="left:1154px;top:1344px;width:174px;height:45.6px;background:#161514;"></div>
<div class="b" style="left:1330px;top:1344px;width:380px;height:45.6px;background:#161514;"></div>
<div class="b t" style="left:1014px;top:1344px;width:300px;height:45.6px;font-size:24px;line-height:45.6px;text-align:right;color:#f4f4f4;">Blend Mode</div>
<div class="b" style="left:1338px;top:1354px;width:159.5px;height:25.5px;background:#3b3b39;border-radius:7px;"></div>
<div class="b t" style="left:1338px;top:1354px;width:148.5px;height:26.5px;font-size:24px;line-height:26.5px;text-align:left;color:#f4f4f4;padding-left:11px;">Alpha</div>
<svg class="b" style="left:1477.5px;top:1354px;" width="20" height="25.5" viewBox="0 0 20 25.5"><polygon points="5,11.5 11,11.5 8,18" fill="#232323"/></svg>
<div class="b" style="left:1154px;top:1392px;width:174px;height:45.6px;background:#161514;"></div>
<div class="b" style="left:1330px;top:1392px;width:380px;height:45.6px;background:#161514;"></div>
<div class="b t" style="left:1014px;top:1392px;width:300px;height:45.6px;font-size:24px;line-height:45.6px;text-align:right;color:#f4f4f4;">Opacity</div>
<div class="b t" style="left:1342.5px;top:1392px;width:120px;height:45.6px;font-size:24px;line-height:45.6px;text-align:left;color:#f4f4f4;">1.00</div>
<div class="b" style="left:1438.3px;top:1402.7px;width:261.5px;height:23px;background:#0b0b0b;border-radius:4px;overflow:hidden;"><div class="b" style="left:0;top:0;width:255.5px;height:23px;background:#2b2b2b"></div><div class="b" style="left:253.5px;top:0;width:8px;height:23px;background:#50705a"></div></div>
<div class="b" style="left:1154px;top:1440px;width:174px;height:45.6px;background:#161514;"></div>
<div class="b" style="left:1330px;top:1440px;width:380px;height:45.6px;background:#161514;"></div>
<div class="b t" style="left:1014px;top:1440px;width:300px;height:45.6px;font-size:24px;line-height:45.6px;text-align:right;color:#f4f4f4;">R</div>
<div class="b t" style="left:1342.5px;top:1440px;width:120px;height:45.6px;font-size:24px;line-height:45.6px;text-align:left;color:#f4f4f4;">1.00</div>
<div class="b" style="left:1438.3px;top:1450.7px;width:261.5px;height:23px;background:#0b0b0b;border-radius:4px;overflow:hidden;"><div class="b" style="left:0;top:0;width:255.5px;height:23px;background:#2b2b2b"></div><div class="b" style="left:253.5px;top:0;width:8px;height:23px;background:#50705a"></div></div>
<div class="b t" style="left:1511px;top:1446.5px;width:199px;height:40px;font-size:43px;line-height:40px;text-align:left;color:rgba(72,72,72,.6);font-weight:bold;font-style:italic;letter-spacing:2.2px;overflow:hidden;filter:blur(.8px);">1.000000</div>
<div class="b" style="left:1154px;top:1488px;width:174px;height:45.6px;background:#161514;"></div>
<div class="b" style="left:1330px;top:1488px;width:380px;height:45.6px;background:#161514;"></div>
<div class="b t" style="left:1014px;top:1488px;width:300px;height:45.6px;font-size:24px;line-height:45.6px;text-align:right;color:#f4f4f4;">G</div>
<div class="b t" style="left:1342.5px;top:1488px;width:120px;height:45.6px;font-size:24px;line-height:45.6px;text-align:left;color:#f4f4f4;">1.00</div>
<div class="b" style="left:1438.3px;top:1498.7px;width:261.5px;height:23px;background:#0b0b0b;border-radius:4px;overflow:hidden;"><div class="b" style="left:0;top:0;width:255.5px;height:23px;background:#2b2b2b"></div><div class="b" style="left:253.5px;top:0;width:8px;height:23px;background:#50705a"></div></div>
<div class="b t" style="left:1511px;top:1494.5px;width:199px;height:40px;font-size:43px;line-height:40px;text-align:left;color:rgba(72,72,72,.6);font-weight:bold;font-style:italic;letter-spacing:2.2px;overflow:hidden;filter:blur(.8px);">1.000000</div>
<div class="b" style="left:1154px;top:1536px;width:174px;height:45.6px;background:#161514;"></div>
<div class="b" style="left:1330px;top:1536px;width:380px;height:45.6px;background:#161514;"></div>
<div class="b t" style="left:1014px;top:1536px;width:300px;height:45.6px;font-size:24px;line-height:45.6px;text-align:right;color:#f4f4f4;">B</div>
<div class="b t" style="left:1342.5px;top:1536px;width:120px;height:45.6px;font-size:24px;line-height:45.6px;text-align:left;color:#f4f4f4;">1.00</div>
<div class="b" style="left:1438.3px;top:1546.7px;width:261.5px;height:23px;background:#0b0b0b;border-radius:4px;overflow:hidden;"><div class="b" style="left:0;top:0;width:255.5px;height:23px;background:#2b2b2b"></div><div class="b" style="left:253.5px;top:0;width:8px;height:23px;background:#50705a"></div></div>
<div class="b t" style="left:1511px;top:1542.5px;width:199px;height:40px;font-size:43px;line-height:40px;text-align:left;color:rgba(72,72,72,.6);font-weight:bold;font-style:italic;letter-spacing:2.2px;overflow:hidden;filter:blur(.8px);">1.000000</div>
<div class="b" style="left:1154px;top:1584px;width:556px;height:45.6px;background:#333333;"></div>
<svg class="b" style="left:1154px;top:1584px;" width="40" height="46" viewBox="0 0 40 46"><polygon points="8.75,19 24.25,19 16.5,29" fill="#7a7a7a"/></svg>
<div class="b t" style="left:1192.5px;top:1584px;width:516px;height:45.6px;font-size:24px;line-height:45.6px;text-align:left;color:#f4f4f4;">Transform</div>
<div class="b" style="left:1712.3px;top:1104px;width:17.7px;height:494px;background:#1c1c1c;"></div>
<div class="b" style="left:1712.3px;top:1104px;width:17.7px;height:211px;background:#333;"></div>
<div class="b" style="left:1736px;top:942px;width:578px;height:655.5px;background:#0b0b0b;"></div>
<div class="b" style="left:1736px;top:942px;width:578px;height:64px;background:#202020;overflow:hidden;isolation:isolate;"><svg class="b" style="left:-69px;top:-170px;filter:blur(2px) brightness(.68);mix-blend-mode:lighten" width="651" height="362"><use href="#wave" width="651" height="362"/></svg><svg class="b" style="left:0;top:0;filter:blur(1.5px)" width="578" height="64"><path d="M396,-2 C420,8 450,25 470,43 C500,47 540,45 580,40 L580,-2 Z" fill="#040404"/><path d="M-2,-2 L26,-2 C20,10 10,22 -2,30 Z" fill="#0a0a0a"/></svg></div>
<div class="b" style="left:1752.5px;top:954.5px;width:245px;height:35px;background:rgba(6,6,6,.93);box-sizing:border-box;border:1.5px solid #5a5a5a;"></div>
<div class="b t" style="left:1752.5px;top:954.5px;width:236px;height:35px;font-size:24px;line-height:35px;text-align:left;color:#f4f4f4;padding-left:9px;">Layer Router</div>
<div class="b" style="left:2244px;top:958px;width:54px;height:28px;background:#3b3b39;border-radius:4px;"></div>
<svg class="b" style="left:2244px;top:958px;" width="54" height="28" viewBox="0 0 54 28"><rect x="18.3" y="4.7" width="3.4" height="3.6" fill="#d6d6d6" transform="rotate(0 20 14)"/><rect x="18.3" y="4.7" width="3.4" height="3.6" fill="#d6d6d6" transform="rotate(45 20 14)"/><rect x="18.3" y="4.7" width="3.4" height="3.6" fill="#d6d6d6" transform="rotate(90 20 14)"/><rect x="18.3" y="4.7" width="3.4" height="3.6" fill="#d6d6d6" transform="rotate(135 20 14)"/><rect x="18.3" y="4.7" width="3.4" height="3.6" fill="#d6d6d6" transform="rotate(180 20 14)"/><rect x="18.3" y="4.7" width="3.4" height="3.6" fill="#d6d6d6" transform="rotate(225 20 14)"/><rect x="18.3" y="4.7" width="3.4" height="3.6" fill="#d6d6d6" transform="rotate(270 20 14)"/><rect x="18.3" y="4.7" width="3.4" height="3.6" fill="#d6d6d6" transform="rotate(315 20 14)"/><circle cx="20" cy="14" r="5.1" fill="none" stroke="#dadada" stroke-width="3"/><polygon points="33.05,11.8 41.55,11.8 37.3,16.8" fill="#e8e8e8"/></svg>
<div class="b" style="left:1736px;top:1008px;width:578px;height:45.6px;background:#333333;"></div>
<svg class="b" style="left:1736px;top:1008px;" width="40" height="46" viewBox="0 0 40 46"><polygon points="10.5,15 10.5,30 22.5,22.5" fill="#7a7a7a"/></svg>
<div class="b t" style="left:1774.5px;top:1008px;width:538px;height:45.6px;font-size:24px;line-height:45.6px;text-align:left;color:#f4f4f4;">Dashboard</div>
<div class="b" style="left:1736px;top:1056px;width:558px;height:45.6px;background:#333333;"></div>
<svg class="b" style="left:1736px;top:1056px;" width="40" height="46" viewBox="0 0 40 46"><polygon points="8.75,19 24.25,19 16.5,29" fill="#7a7a7a"/></svg>
<div class="b t" style="left:1774.5px;top:1056px;width:518px;height:45.6px;font-size:24px;line-height:45.6px;text-align:left;color:#f4f4f4;">Video: Layer Router</div>
<div class="b" style="left:1736px;top:1104px;width:174px;height:93.6px;background:#344334;"></div>
<div class="b" style="left:1912px;top:1104px;width:382px;height:93.6px;background:#344334;"></div>
<svg class="b" style="left:1800px;top:1112px;outline:1.5px solid #707070;outline-offset:-1px;" width="98" height="76"><use href="#wave" width="98" height="76"/></svg>
<div class="b" style="left:2210.5px;top:1113px;width:33px;height:30.5px;background:#2f3a30;border-radius:7px;"></div>
<svg class="b" style="left:2210.5px;top:1113px;" width="33" height="30.5" viewBox="0 0 33 30.5"><path d="M8.5,8 h6 v3 h-3 v3 h-3 z M24.5,8 h-6 v3 h3 v3 h3 z M8.5,23 h6 v-3 h-3 v-3 h-3 z M24.5,23 h-6 v-3 h3 v-3 h3 z" fill="#f0f0f0"/></svg>
<div class="b t" style="left:2254px;top:1113px;width:32px;height:30.5px;background:#2f3a30;font-size:17px;line-height:30.5px;text-align:center;color:#f4f4f4;border-radius:7px;font-weight:bold;">x</div>
<div class="b" style="left:2158px;top:1156px;width:128px;height:32px;background:#b0ec64;border-radius:9px;"></div>
<div class="b t" style="left:2161px;top:1156px;width:30.5px;height:33px;font-size:15.5px;line-height:33px;text-align:center;color:#3a4a20;">R</div>
<div class="b t" style="left:2191.5px;top:1156px;width:30.5px;height:33px;font-size:15.5px;line-height:33px;text-align:center;color:#3a4a20;">G</div>
<div class="b t" style="left:2222px;top:1156px;width:30.5px;height:33px;font-size:15.5px;line-height:33px;text-align:center;color:#3a4a20;">B</div>
<div class="b t" style="left:2252.5px;top:1156px;width:30.5px;height:33px;font-size:15.5px;line-height:33px;text-align:center;color:#3a4a20;">A</div>
<div class="b" style="left:1736px;top:1200px;width:174px;height:45.6px;background:#161514;"></div>
<div class="b" style="left:1912px;top:1200px;width:382px;height:45.6px;background:#161514;"></div>
<div class="b t" style="left:1596px;top:1200px;width:300px;height:45.6px;font-size:24px;line-height:45.6px;text-align:right;color:#f4f4f4;">Input</div>
<div class="b" style="left:1918px;top:1208px;width:200px;height:28px;background:#3b3b39;border-radius:7px;"></div>
<div class="b t" style="left:1918px;top:1208px;width:188px;height:29px;font-size:24px;line-height:29px;text-align:left;color:#f4f4f4;padding-left:12px;">Layer 4</div>
<svg class="b" style="left:2098px;top:1208px;" width="20" height="28" viewBox="0 0 20 28"><polygon points="5,12.75 11,12.75 8,19.25" fill="#232323"/></svg>
<div class="b" style="left:1736px;top:1248px;width:174px;height:45.6px;background:#161514;"></div>
<div class="b" style="left:1912px;top:1248px;width:382px;height:45.6px;background:#161514;"></div>
<div class="b t" style="left:1596px;top:1248px;width:300px;height:45.6px;font-size:24px;line-height:45.6px;text-align:right;color:#f4f4f4;transform:scaleX(0.85);transform-origin:100% 50%;white-space:nowrap;">Input Opacity</div>
<div class="b" style="left:1919px;top:1259px;width:24px;height:24px;box-sizing:border-box;border:2px solid #4a4a4a;border-radius:6px;"></div>
<div class="b" style="left:1736px;top:1296px;width:174px;height:45.6px;background:#161514;"></div>
<div class="b" style="left:1912px;top:1296px;width:382px;height:45.6px;background:#161514;"></div>
<div class="b t" style="left:1596px;top:1296px;width:300px;height:45.6px;font-size:24px;line-height:45.6px;text-align:right;color:#f4f4f4;transform:scaleX(0.7);transform-origin:100% 50%;white-space:nowrap;">Input Bypass....</div>
<div class="b" style="left:1919px;top:1307px;width:24px;height:24px;box-sizing:border-box;border:2px solid #4a4a4a;border-radius:6px;"></div>
<div class="b" style="left:1736px;top:1344px;width:174px;height:45.6px;background:#161514;"></div>
<div class="b" style="left:1912px;top:1344px;width:382px;height:45.6px;background:#161514;"></div>
<div class="b t" style="left:1596px;top:1344px;width:300px;height:45.6px;font-size:24px;line-height:45.6px;text-align:right;color:#f4f4f4;">Duration</div>
<div class="b t" style="left:1924.5px;top:1344px;width:120px;height:45.6px;font-size:24px;line-height:45.6px;text-align:left;color:#f4f4f4;">5000</div>
<div class="b t" style="left:2020px;top:1352.5px;width:60px;height:27.5px;background:#3b3b39;font-size:19px;line-height:27.5px;text-align:center;color:#f4f4f4;border-radius:7px;">-&nbsp;&nbsp;&nbsp;+</div>
<div class="b" style="left:1736px;top:1392px;width:558px;height:45.6px;background:#333333;"></div>
<svg class="b" style="left:1736px;top:1392px;" width="40" height="46" viewBox="0 0 40 46"><polygon points="8.75,19 24.25,19 16.5,29" fill="#7a7a7a"/></svg>
<div class="b t" style="left:1774.5px;top:1392px;width:518px;height:45.6px;font-size:24px;line-height:45.6px;text-align:left;color:#f4f4f4;">Transform</div>
<svg class="b" style="left:2242px;top:1405px;" width="36" height="20" viewBox="0 0 36 20"><rect x="0" y="1" width="36" height="1.6" fill="#4c4c4c"/><rect x="0" y="9.2" width="36" height="1.6" fill="#4c4c4c"/><rect x="0" y="17.4" width="36" height="1.6" fill="#4c4c4c"/></svg>
<div class="b" style="left:1736px;top:1440px;width:174px;height:45.6px;background:#161514;"></div>
<div class="b" style="left:1912px;top:1440px;width:382px;height:45.6px;background:#161514;"></div>
<div class="b t" style="left:1596px;top:1440px;width:300px;height:45.6px;font-size:24px;line-height:45.6px;text-align:right;color:#f4f4f4;">Opacity</div>
<div class="b t" style="left:1924.5px;top:1440px;width:120px;height:45.6px;font-size:24px;line-height:45.6px;text-align:left;color:#f4f4f4;">1.00</div>
<div class="b" style="left:2020px;top:1450.7px;width:263.7px;height:23px;background:#0b0b0b;border-radius:4px;overflow:hidden;"><div class="b" style="left:0;top:0;width:257.7px;height:23px;background:#2b2b2b"></div><div class="b" style="left:255.7px;top:0;width:8px;height:23px;background:#50705a"></div></div>
<div class="b" style="left:1736px;top:1488px;width:174px;height:45.6px;background:#161514;"></div>
<div class="b" style="left:1912px;top:1488px;width:382px;height:45.6px;background:#161514;"></div>
<div class="b t" style="left:1596px;top:1488px;width:300px;height:45.6px;font-size:24px;line-height:45.6px;text-align:right;color:#f4f4f4;">Width</div>
<div class="b t" style="left:1924.5px;top:1488px;width:120px;height:45.6px;font-size:24px;line-height:45.6px;text-align:left;color:#f4f4f4;">640.00</div>
<div class="b" style="left:2020px;top:1498.7px;width:263.7px;height:23px;background:#0b0b0b;border-radius:4px;overflow:hidden;"><div class="b" style="left:0;top:0;width:11.8px;height:23px;background:#2b2b2b"></div><div class="b" style="left:9.8px;top:0;width:8px;height:23px;background:#50705a"></div></div>
<div class="b" style="left:1736px;top:1536px;width:174px;height:45.6px;background:#161514;"></div>
<div class="b" style="left:1912px;top:1536px;width:382px;height:45.6px;background:#161514;"></div>
<div class="b t" style="left:1596px;top:1536px;width:300px;height:45.6px;font-size:24px;line-height:45.6px;text-align:right;color:#f4f4f4;">Height</div>
<div class="b t" style="left:1924.5px;top:1536px;width:120px;height:45.6px;font-size:24px;line-height:45.6px;text-align:left;color:#f4f4f4;">480.00</div>
<div class="b" style="left:2020px;top:1546.7px;width:263.7px;height:23px;background:#0b0b0b;border-radius:4px;overflow:hidden;"><div class="b" style="left:0;top:0;width:7.8px;height:23px;background:#2b2b2b"></div><div class="b" style="left:5.8px;top:0;width:8px;height:23px;background:#50705a"></div></div>
<div class="b" style="left:1736px;top:1584px;width:174px;height:45.6px;background:#161514;"></div>
<div class="b" style="left:1912px;top:1584px;width:382px;height:45.6px;background:#161514;"></div>
<div class="b t" style="left:1596px;top:1584px;width:300px;height:45.6px;font-size:24px;line-height:45.6px;text-align:right;color:#f4f4f4;">Scale</div>
<div class="b t" style="left:1924.5px;top:1584px;width:120px;height:45.6px;font-size:24px;line-height:45.6px;text-align:left;color:#f4f4f4;transform:scaleX(0.7);transform-origin:0 50%;white-space:nowrap;">100.00 %</div>
<div class="b" style="left:2020px;top:1594.7px;width:263.7px;height:23px;background:#0b0b0b;border-radius:4px;overflow:hidden;"><div class="b" style="left:0;top:0;width:27px;height:23px;background:#2b2b2b"></div><div class="b" style="left:25px;top:0;width:8px;height:23px;background:#50705a"></div></div>
<div class="b" style="left:2296.3px;top:1056px;width:17.7px;height:542px;background:#1c1c1c;"></div>
<div class="b" style="left:2296.3px;top:1056px;width:17.7px;height:306px;background:#333;"></div>
<div class="b t" style="left:2328px;top:942px;width:94px;height:42.5px;background:#2b2b2b;font-size:24.5px;line-height:42.5px;text-align:center;color:#f4f4f4;border-radius:7px 7px 0 0;">Files</div>
<div class="b t" style="left:2423.3px;top:942px;width:194.7px;height:42.5px;background:#161514;font-size:24.5px;line-height:42.5px;text-align:center;color:#b4b4b4;border-radius:7px 7px 0 0;">Compositions</div>
<div class="b t" style="left:2619.7px;top:942px;width:116px;height:42.5px;background:#161514;font-size:24.5px;line-height:42.5px;text-align:center;color:#b4b4b4;border-radius:7px 7px 0 0;">Effects</div>
<div class="b t" style="left:2737.4px;top:942px;width:128.6px;height:42.5px;background:#161514;font-size:24.5px;line-height:42.5px;text-align:center;color:#b4b4b4;border-radius:7px 7px 0 0;">Sources</div>
<div class="b" style="left:2320.3px;top:986.5px;width:560px;height:70px;background:#161514;"></div>
<div class="b" style="left:2332px;top:1004px;width:82px;height:34px;background:#3b3b39;border-radius:8px;"></div>
<svg class="b" style="left:2332px;top:1004px;" width="40" height="34" viewBox="0 0 40 34"><path d="M20,8.5 L27,17 L22.2,17 L22.2,25 L17.8,25 L17.8,17 L13,17 Z" fill="#fff"/></svg>
<div class="b t" style="left:2366px;top:1004px;width:40px;height:35px;font-size:19.5px;line-height:35px;text-align:left;color:#f4f4f4;">Up</div>
<div class="b" style="left:2422px;top:1004px;width:327.5px;height:34px;background:#3b3b39;border-radius:7px;"></div>
<div class="b t" style="left:2422px;top:1004px;width:313.5px;height:35px;font-size:22px;line-height:35px;text-align:left;color:#f4f4f4;padding-left:14px;">/Users/gianpablo/VJ Footage</div>
<svg class="b" style="left:2729.5px;top:1004px;" width="20" height="34" viewBox="0 0 20 34"><polygon points="5,15.75 11,15.75 8,22.25" fill="#222"/></svg>
<div class="b" style="left:2757.7px;top:1004px;width:68px;height:34px;background:#3b3b39;border-radius:8px;overflow:hidden;"><div class="b" style="left:0;top:0;width:34.3px;height:34px;background:#b0ec64"></div></div>
<div class="b t" style="left:2757.7px;top:1004px;width:34.3px;height:36px;font-size:17px;line-height:36px;text-align:center;color:#2a3418;">A</div>
<div class="b t" style="left:2792px;top:1004px;width:33.7px;height:36px;font-size:15.5px;line-height:36px;text-align:center;color:#f4f4f4;font-weight:bold;">B</div>
<div class="b" style="left:2833.8px;top:1004px;width:34px;height:34px;background:#3b3b39;border-radius:8px;"></div>
<svg class="b" style="left:2833.8px;top:1004px;" width="34" height="34" viewBox="0 0 34 34"><rect x="8" y="10.5" width="7" height="5.5" fill="#f0f0f0"/><rect x="17" y="12" width="9" height="2.6" fill="#f0f0f0"/><rect x="8" y="18.5" width="7" height="5.5" fill="#f0f0f0"/><rect x="17" y="20" width="9" height="2.6" fill="#f0f0f0"/></svg>
<div class="b" style="left:2320.3px;top:1057.5px;width:536.5px;height:336.5px;background:#0a0a0a;overflow:hidden;"></div>
<div class="b" style="left:2858px;top:1057.5px;width:22px;height:336.5px;background:#1e1e1e;"></div>
<div class="b" style="left:2858px;top:1205.7px;width:22px;height:124px;background:#333;"></div>
<svg width="0" height="0" style="position:absolute"><defs><linearGradient id="fg" x1="0" y1="0" x2="0" y2="1"><stop offset="0" stop-color="#b4b4b4"/><stop offset="1" stop-color="#4a4a4a"/></linearGradient></defs></svg>
<svg class="b" style="left:2336px;top:1052px;" width="80" height="40" viewBox="0 0 80 40"><polygon points="5.75,12.25 5.75,26.75 17.25,19.5" fill="#808080"/><path d="M40,9.5 C40,7.5 41,6.5 43,6.5 L52,6.5 C54,6.5 55,7.5 56,9.5 L69.5,9.5 C71.5,9.5 72.5,10.5 72.5,12.5 L72.5,30 C72.5,31.5 71.5,32.3 70,32.3 L42.5,32.3 C41,32.3 40,31.5 40,30 Z" fill="url(#fg)"/></svg>
<div class="b" style="left:2424px;top:1052px;width:440px;height:40px;overflow:hidden;"><div class="b t" style="left:0;top:0;width:440px;height:40px;line-height:41px;font-size:24.3px;text-align:left;color:#f4f4f4;transform:scaleX(1.02);transform-origin:0 50%">microtech 640x480 mov</div></div>
<svg class="b" style="left:2336px;top:1095.9px;" width="80" height="40" viewBox="0 0 80 40"><polygon points="5.75,12.25 5.75,26.75 17.25,19.5" fill="#808080"/><path d="M40,9.5 C40,7.5 41,6.5 43,6.5 L52,6.5 C54,6.5 55,7.5 56,9.5 L69.5,9.5 C71.5,9.5 72.5,10.5 72.5,12.5 L72.5,30 C72.5,31.5 71.5,32.3 70,32.3 L42.5,32.3 C41,32.3 40,31.5 40,30 Z" fill="url(#fg)"/></svg>
<div class="b" style="left:2424px;top:1095.9px;width:440px;height:40px;overflow:hidden;"><div class="b t" style="left:0;top:0;width:440px;height:40px;line-height:41px;font-size:24.3px;text-align:left;color:#f4f4f4;transform:scaleX(0.855);transform-origin:0 50%">NY VJ</div></div>
<svg class="b" style="left:2336px;top:1139.8px;" width="80" height="40" viewBox="0 0 80 40"><polygon points="5.75,12.25 5.75,26.75 17.25,19.5" fill="#808080"/><path d="M40,9.5 C40,7.5 41,6.5 43,6.5 L52,6.5 C54,6.5 55,7.5 56,9.5 L69.5,9.5 C71.5,9.5 72.5,10.5 72.5,12.5 L72.5,30 C72.5,31.5 71.5,32.3 70,32.3 L42.5,32.3 C41,32.3 40,31.5 40,30 Z" fill="url(#fg)"/></svg>
<div class="b" style="left:2424px;top:1139.8px;width:440px;height:40px;overflow:hidden;"><div class="b t" style="left:0;top:0;width:440px;height:40px;line-height:41px;font-size:24.3px;text-align:left;color:#f4f4f4;transform:scaleX(0.9);transform-origin:0 50%">ReadMe</div></div>
<svg class="b" style="left:2336px;top:1183.7px;" width="80" height="40" viewBox="0 0 80 40"><polygon points="5.75,12.25 5.75,26.75 17.25,19.5" fill="#808080"/><path d="M40,9.5 C40,7.5 41,6.5 43,6.5 L52,6.5 C54,6.5 55,7.5 56,9.5 L69.5,9.5 C71.5,9.5 72.5,10.5 72.5,12.5 L72.5,30 C72.5,31.5 71.5,32.3 70,32.3 L42.5,32.3 C41,32.3 40,31.5 40,30 Z" fill="url(#fg)"/></svg>
<div class="b" style="left:2424px;top:1183.7px;width:440px;height:40px;overflow:hidden;"><div class="b t" style="left:0;top:0;width:440px;height:40px;line-height:41px;font-size:24.3px;text-align:left;color:#f4f4f4;transform:scaleX(0.99);transform-origin:0 50%">Shibuya Neon 640x480</div></div>
<svg class="b" style="left:2336px;top:1227.6px;" width="80" height="40" viewBox="0 0 80 40"><polygon points="5.75,12.25 5.75,26.75 17.25,19.5" fill="#808080"/><path d="M40,9.5 C40,7.5 41,6.5 43,6.5 L52,6.5 C54,6.5 55,7.5 56,9.5 L69.5,9.5 C71.5,9.5 72.5,10.5 72.5,12.5 L72.5,30 C72.5,31.5 71.5,32.3 70,32.3 L42.5,32.3 C41,32.3 40,31.5 40,30 Z" fill="url(#fg)"/></svg>
<div class="b" style="left:2424px;top:1227.6px;width:440px;height:40px;overflow:hidden;"><div class="b t" style="left:0;top:0;width:440px;height:40px;line-height:41px;font-size:24.3px;text-align:left;color:#f4f4f4;transform:scaleX(1.0);transform-origin:0 50%">shop</div></div>
<svg class="b" style="left:2336px;top:1271.5px;" width="80" height="40" viewBox="0 0 80 40"><polygon points="5.75,12.25 5.75,26.75 17.25,19.5" fill="#808080"/><path d="M40,9.5 C40,7.5 41,6.5 43,6.5 L52,6.5 C54,6.5 55,7.5 56,9.5 L69.5,9.5 C71.5,9.5 72.5,10.5 72.5,12.5 L72.5,30 C72.5,31.5 71.5,32.3 70,32.3 L42.5,32.3 C41,32.3 40,31.5 40,30 Z" fill="url(#fg)"/></svg>
<div class="b" style="left:2424px;top:1271.5px;width:440px;height:40px;overflow:hidden;"><div class="b t" style="left:0;top:0;width:440px;height:40px;line-height:41px;font-size:24.3px;text-align:left;color:#f4f4f4;transform:scaleX(0.97);transform-origin:0 50%">Silhouette Dancers</div></div>
<svg class="b" style="left:2336px;top:1315.4px;" width="80" height="40" viewBox="0 0 80 40"><polygon points="5.75,12.25 5.75,26.75 17.25,19.5" fill="#808080"/><path d="M40,9.5 C40,7.5 41,6.5 43,6.5 L52,6.5 C54,6.5 55,7.5 56,9.5 L69.5,9.5 C71.5,9.5 72.5,10.5 72.5,12.5 L72.5,30 C72.5,31.5 71.5,32.3 70,32.3 L42.5,32.3 C41,32.3 40,31.5 40,30 Z" fill="url(#fg)"/></svg>
<div class="b" style="left:2424px;top:1315.4px;width:440px;height:40px;overflow:hidden;"><div class="b t" style="left:0;top:0;width:440px;height:40px;line-height:41px;font-size:24.3px;text-align:left;color:#f4f4f4;transform:scaleX(0.855);transform-origin:0 50%">Skies MJPEG</div></div>
<svg class="b" style="left:2336px;top:1359.3px;" width="80" height="40" viewBox="0 0 80 40"><polygon points="5.75,12.25 5.75,26.75 17.25,19.5" fill="#808080"/><path d="M40,9.5 C40,7.5 41,6.5 43,6.5 L52,6.5 C54,6.5 55,7.5 56,9.5 L69.5,9.5 C71.5,9.5 72.5,10.5 72.5,12.5 L72.5,30 C72.5,31.5 71.5,32.3 70,32.3 L42.5,32.3 C41,32.3 40,31.5 40,30 Z" fill="url(#fg)"/></svg>
<div class="b" style="left:2424px;top:1359.3px;width:440px;height:40px;overflow:hidden;"><div class="b t" style="left:0;top:0;width:440px;height:40px;line-height:41px;font-size:24.3px;text-align:left;color:#f4f4f4;transform:scaleX(0.92);transform-origin:0 50%">Soulclipse VJ</div></div>
<div class="b" style="left:2320.3px;top:1400px;width:560px;height:40px;background:#2c2c2c;"></div>
<div class="b t" style="left:2334px;top:1400px;width:100px;height:40px;font-size:25px;line-height:40px;text-align:left;color:#f4f4f4;">Clip</div>
<div class="b t" style="left:2846px;top:1406.5px;width:27.5px;height:27px;background:#3a3a3a;font-size:14px;line-height:27px;text-align:center;color:#f4f4f4;border-radius:6px;font-weight:bold;">x</div>
<div class="b" style="left:2320.3px;top:1442px;width:560px;height:156px;background:#0a0a0a;"></div>
<div class="b t" style="left:2334px;top:1448.5px;width:540px;height:24.2px;font-size:21.5px;line-height:24.2px;text-align:left;color:#c2c2c2;letter-spacing:.55px;">Click the preview image to trigger the clip. Click</div>
<div class="b t" style="left:2334px;top:1472.7px;width:540px;height:24.2px;font-size:21.5px;line-height:24.2px;text-align:left;color:#c2c2c2;letter-spacing:.55px;">the name of the clip to preview it and to drag</div>
<div class="b t" style="left:2334px;top:1496.9px;width:540px;height:24.2px;font-size:21.5px;line-height:24.2px;text-align:left;color:#c2c2c2;letter-spacing:.55px;">the clip to a different position in the deck.</div>
<div class="b" style="left:0px;top:1597.5px;width:2880px;height:6.5px;background:#000;"></div>
<div class="b" style="left:0px;top:1603.5px;width:2880px;height:47px;background:#2b2b2b;"></div>
<div class="b t" style="left:17px;top:1604px;width:80px;height:46px;font-size:22px;line-height:46px;text-align:left;color:#f4f4f4;letter-spacing:.6px;">15:17</div>
<div class="b t" style="left:92px;top:1604px;width:400px;height:46px;font-size:22px;line-height:46px;text-align:left;color:#f4f4f4;">Resolume Arena 4.2.2</div>
</body></html>
